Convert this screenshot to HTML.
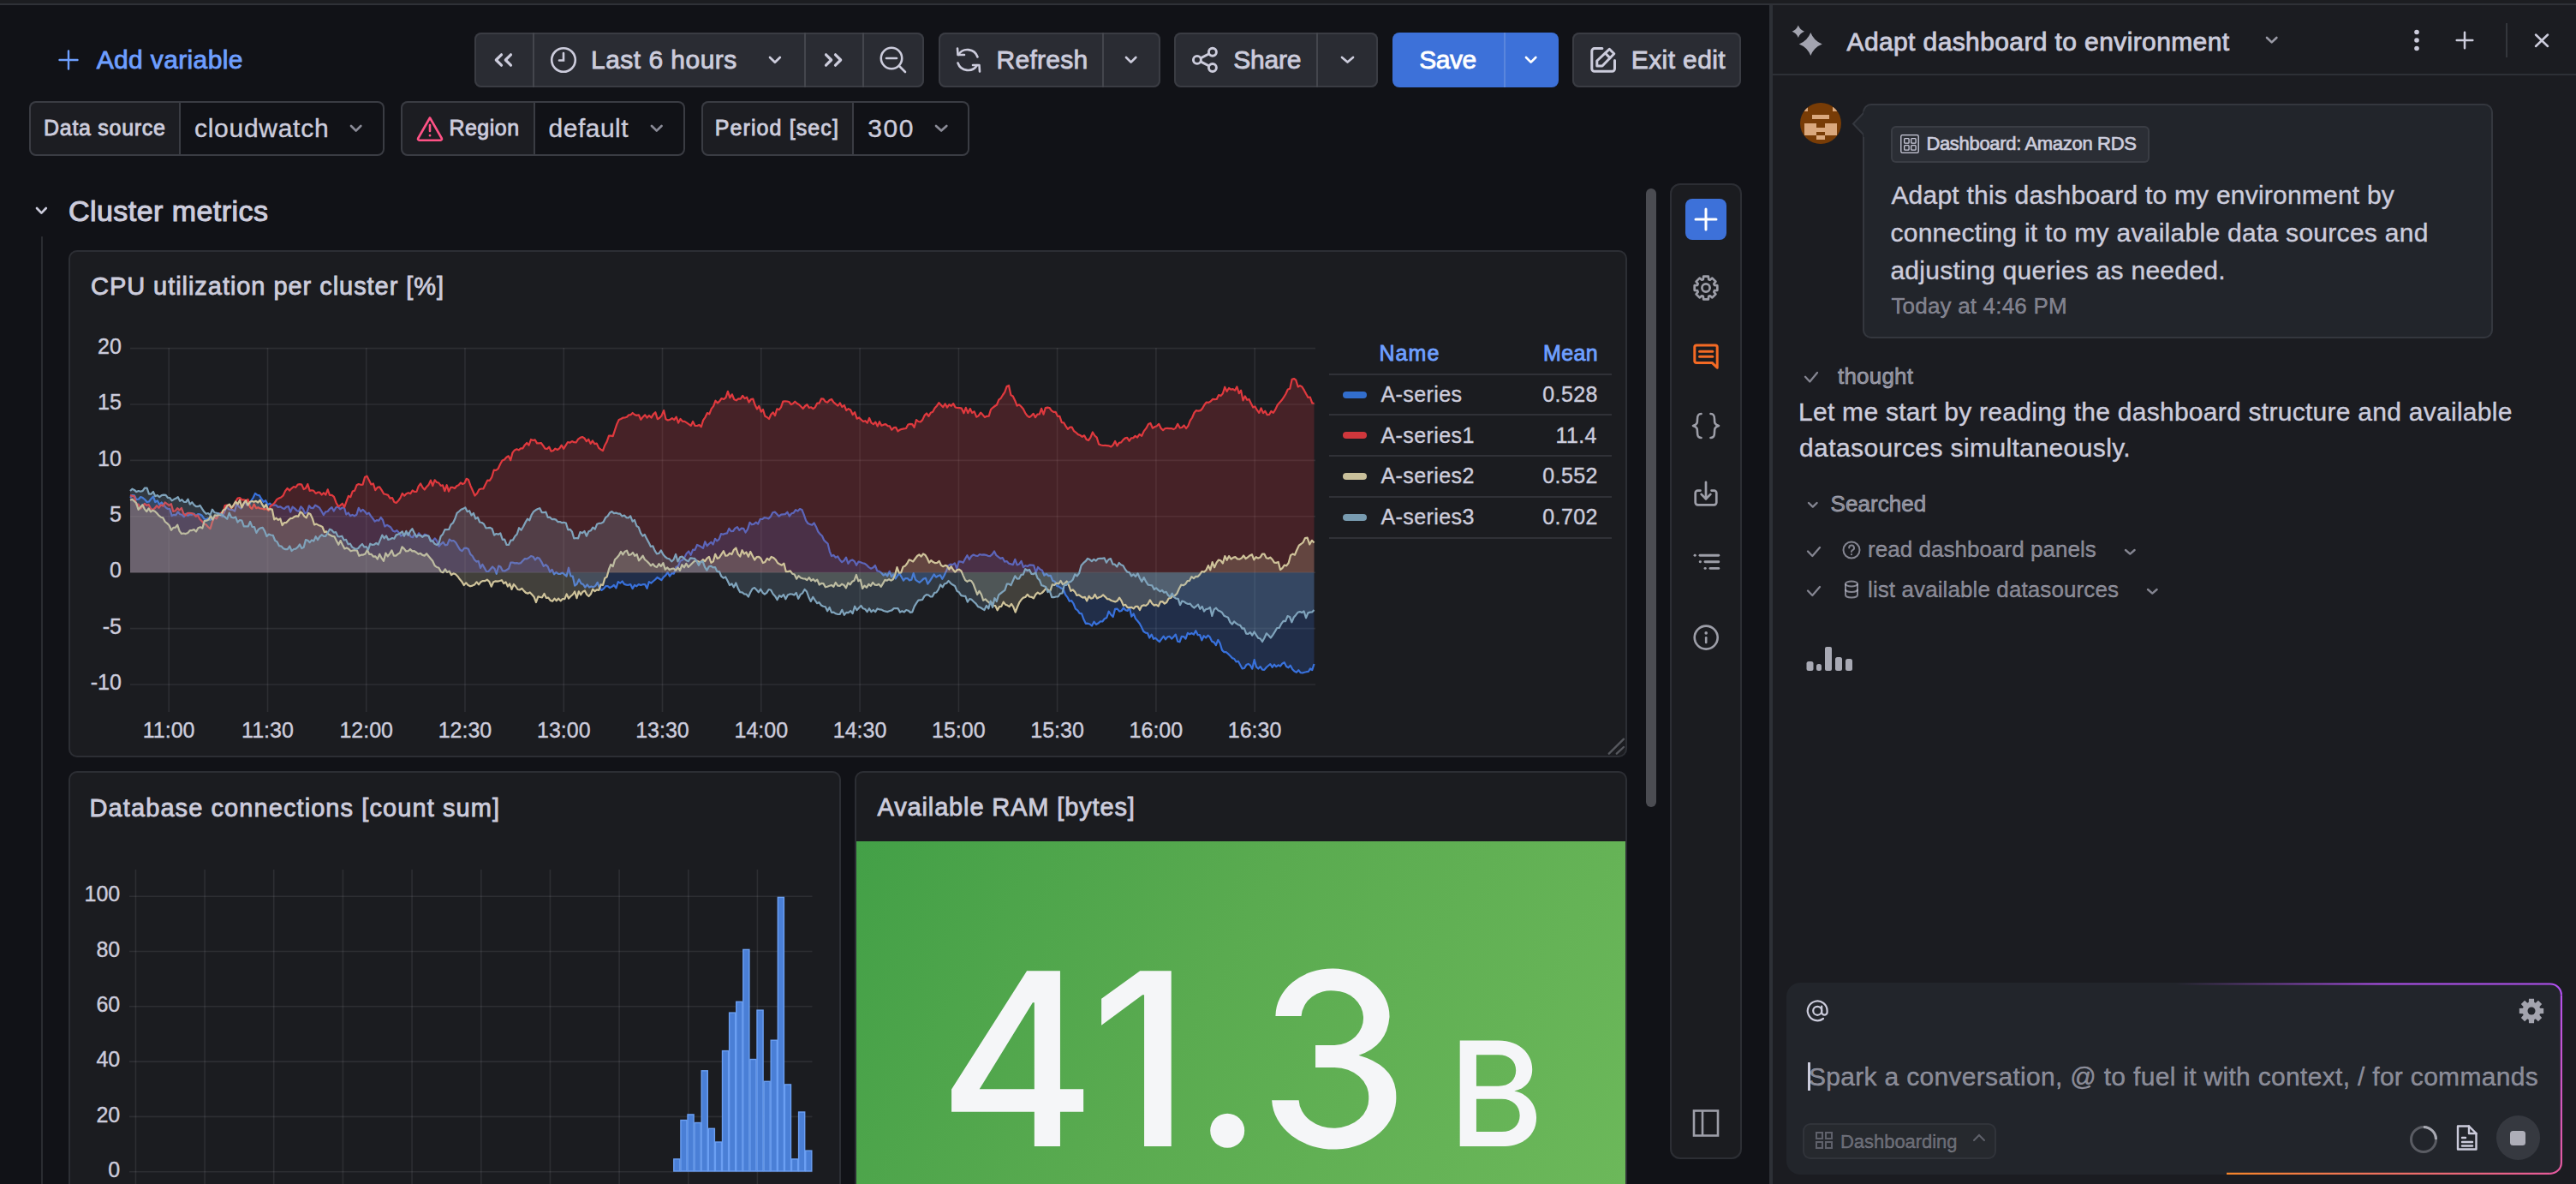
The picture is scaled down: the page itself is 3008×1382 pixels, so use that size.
<!DOCTYPE html>
<html><head><meta charset="utf-8"><title>Grafana</title>
<style>
html,body{margin:0;padding:0;}
body{width:3008px;height:1382px;overflow:hidden;background:#111217;position:relative;font-family:"Liberation Sans",sans-serif;}
.b,.s,.t{position:absolute;}
.t{white-space:pre;}
.s{overflow:visible;}
</style></head><body>
<div class="b" style="left:0px;top:0px;width:3008px;height:4px;background:#1c1d21;"></div>
<div class="b" style="left:0px;top:4px;width:3008px;height:2px;background:#2f3137;"></div>
<svg class="s" style="left:68px;top:58px;" width="24" height="24" viewBox="0 0 24 24"><path d="M12 1.5V22.5M1.5 12H22.5" stroke="#6e9fff" stroke-width="2.4" stroke-linecap="round"/></svg>
<div class="b" style="left:554px;top:38px;width:525px;height:64px;background:#2a2c33;box-shadow:inset 0 0 0 2px #3a3c43;border-radius:8px;"></div>
<div class="b" style="left:622px;top:38px;width:2px;height:64px;background:#44464d;"></div>
<div class="b" style="left:939px;top:38px;width:2px;height:64px;background:#44464d;"></div>
<div class="b" style="left:1007px;top:38px;width:2px;height:64px;background:#44464d;"></div>
<svg class="s" style="left:574px;top:58px;" width="28" height="24" viewBox="0 0 28 24"><g fill="none" stroke="#ccccdc" stroke-width="3.2" stroke-linecap="round" stroke-linejoin="round"><polyline points="11.5,5.8 5.3,12 11.5,18.2"/><polyline points="22.5,5.8 16.3,12 22.5,18.2"/></g></svg>
<svg class="s" style="left:642px;top:54px;" width="32" height="32" viewBox="0 0 32 32"><g fill="none" stroke="#ccccdc" stroke-width="2.6" stroke-linecap="round"><circle cx="16" cy="16" r="13.8"/><polyline points="16,8 16,16.5 11,16.5"/></g></svg>
<svg class="s" style="left:895.85px;top:63.85px;" width="17.8" height="11.8" viewBox="0 0 17.8 11.8"><polyline points="3,3 8.90,8.80 14.80,3" fill="none" stroke="#ccccdc" stroke-width="2.7" stroke-linecap="round" stroke-linejoin="round"/></svg>
<svg class="s" style="left:959px;top:58px;" width="28" height="24" viewBox="0 0 28 24"><g fill="none" stroke="#ccccdc" stroke-width="3.2" stroke-linecap="round" stroke-linejoin="round"><polyline points="5.5,5.8 11.7,12 5.5,18.2"/><polyline points="16.5,5.8 22.7,12 16.5,18.2"/></g></svg>
<svg class="s" style="left:1026px;top:53px;" width="34" height="34" viewBox="0 0 34 34"><g fill="none" stroke="#ccccdc" stroke-width="2.6" stroke-linecap="round"><circle cx="15" cy="15" r="12.2"/><line x1="24" y1="24" x2="31" y2="31"/><line x1="9" y1="15" x2="21" y2="15"/></g></svg>
<div class="b" style="left:1095.5px;top:38px;width:259.5px;height:64px;background:#2a2c33;box-shadow:inset 0 0 0 2px #3a3c43;border-radius:8px;"></div>
<div class="b" style="left:1287px;top:38px;width:2px;height:64px;background:#44464d;"></div>
<svg class="s" style="left:1114px;top:53px;" width="34" height="34" viewBox="0 0 34 34"><g fill="none" stroke="#ccccdc" stroke-width="2.6" stroke-linecap="round" stroke-linejoin="round"><path d="M27.5 13.5 A12.5 12.5 0 0 0 5 11"/><polyline points="4,3.5 4.5,11 12,11"/><path d="M4.5 20.5 A12.5 12.5 0 0 0 27 23"/><polyline points="30,30.5 29.5,23 22,23"/></g></svg>
<svg class="s" style="left:1312.35px;top:64.35px;" width="17.3" height="11.599999999999998" viewBox="0 0 17.3 11.599999999999998"><polyline points="3,3 8.65,8.60 14.30,3" fill="none" stroke="#ccccdc" stroke-width="2.7" stroke-linecap="round" stroke-linejoin="round"/></svg>
<div class="b" style="left:1371.4px;top:38px;width:238.0px;height:64px;background:#2a2c33;box-shadow:inset 0 0 0 2px #3a3c43;border-radius:8px;"></div>
<div class="b" style="left:1537.3px;top:38px;width:2.0px;height:64px;background:#44464d;"></div>
<svg class="s" style="left:0px;top:0px;" width="3008" height="1382" viewBox="0 0 3008 1382"><g fill="none" stroke="#ccccdc" stroke-width="2.9"><circle cx="1397.9" cy="69.9" r="4.5"/><circle cx="1415.9" cy="60.8" r="4.5"/><circle cx="1415.9" cy="79" r="4.5"/><line x1="1401.9" y1="67.9" x2="1411.9" y2="62.8"/><line x1="1401.9" y1="71.9" x2="1411.9" y2="77"/></g></svg>
<svg class="s" style="left:1564.35px;top:64.35px;" width="19.000000000000046" height="11.599999999999998" viewBox="0 0 19.000000000000046 11.599999999999998"><polyline points="3,3 9.50,8.60 16.00,3" fill="none" stroke="#ccccdc" stroke-width="2.7" stroke-linecap="round" stroke-linejoin="round"/></svg>
<div class="b" style="left:1625.7px;top:38px;width:194.0px;height:64px;background:#3d71d9;border-radius:8px;"></div>
<div class="b" style="left:1755.5px;top:38px;width:2.0px;height:64px;background:#5a86dd;"></div>
<svg class="s" style="left:1779.35px;top:64.35px;" width="17.3" height="11.599999999999998" viewBox="0 0 17.3 11.599999999999998"><polyline points="3,3 8.65,8.60 14.30,3" fill="none" stroke="#ffffff" stroke-width="2.7" stroke-linecap="round" stroke-linejoin="round"/></svg>
<div class="b" style="left:1836px;top:38px;width:197.29999999999995px;height:64px;background:#2a2c33;box-shadow:inset 0 0 0 2px #3a3c43;border-radius:8px;"></div>
<svg class="s" style="left:0px;top:0px;" width="3008" height="1382" viewBox="0 0 3008 1382"><g fill="none" stroke="#ccccdc" stroke-width="3" stroke-linecap="round" stroke-linejoin="round"><path d="M1870.9 56.6H1861.8a3 3 0 0 0-3 3V80.2a3 3 0 0 0 3 3H1882.5a3 3 0 0 0 3-3V70.4"/><path d="M1864.8 77V71L1879.3 57.3L1884.8 62.8L1871 77Z"/><line x1="1874.4" y1="62" x2="1880" y2="67.6"/></g></svg>
<div class="b" style="left:34px;top:118px;width:176px;height:64px;background:#1c1d22;border-radius:8px;border-top-right-radius:0;border-bottom-right-radius:0;"></div>
<div class="b" style="left:34px;top:118px;width:415.2px;height:64px;box-shadow:inset 0 0 0 2px #3a3c43;border-radius:8px;"></div>
<div class="b" style="left:209px;top:118px;width:2px;height:64px;background:#3a3c43;"></div>
<svg class="s" style="left:407.35px;top:144.35px;" width="17.3" height="11.600000000000012" viewBox="0 0 17.3 11.600000000000012"><polyline points="3,3 8.65,8.60 14.30,3" fill="none" stroke="rgba(204,204,220,0.65)" stroke-width="2.7" stroke-linecap="round" stroke-linejoin="round"/></svg>
<div class="b" style="left:468.2px;top:118px;width:155.8px;height:64px;background:#1c1d22;border-radius:8px;border-top-right-radius:0;border-bottom-right-radius:0;"></div>
<div class="b" style="left:468.2px;top:118px;width:332.09999999999997px;height:64px;box-shadow:inset 0 0 0 2px #3a3c43;border-radius:8px;"></div>
<div class="b" style="left:623px;top:118px;width:2px;height:64px;background:#3a3c43;"></div>
<svg class="s" style="left:485px;top:134px;" width="34" height="32" viewBox="0 0 34 32"><g fill="none" stroke="#ff5286" stroke-width="2.6" stroke-linecap="round" stroke-linejoin="round"><path d="M17 3.5L3.2 27.5a1.5 1.5 0 0 0 1.3 2.2h25a1.5 1.5 0 0 0 1.3-2.2z"/><line x1="17" y1="12" x2="17" y2="19"/><line x1="17" y1="24" x2="17" y2="24.2"/></g></svg>
<svg class="s" style="left:758.35px;top:144.35px;" width="17.500000000000046" height="11.600000000000012" viewBox="0 0 17.500000000000046 11.600000000000012"><polyline points="3,3 8.75,8.60 14.50,3" fill="none" stroke="rgba(204,204,220,0.65)" stroke-width="2.7" stroke-linecap="round" stroke-linejoin="round"/></svg>
<div class="b" style="left:819.3px;top:118px;width:176.70000000000005px;height:64px;background:#1c1d22;border-radius:8px;border-top-right-radius:0;border-bottom-right-radius:0;"></div>
<div class="b" style="left:819.3px;top:118px;width:312.5px;height:64px;box-shadow:inset 0 0 0 2px #3a3c43;border-radius:8px;"></div>
<div class="b" style="left:995px;top:118px;width:2px;height:64px;background:#3a3c43;"></div>
<svg class="s" style="left:1089.9499999999998px;top:144.35px;" width="18.3" height="11.600000000000012" viewBox="0 0 18.3 11.600000000000012"><polyline points="3,3 9.15,8.60 15.30,3" fill="none" stroke="rgba(204,204,220,0.65)" stroke-width="2.7" stroke-linecap="round" stroke-linejoin="round"/></svg>
<svg class="s" style="left:39.85px;top:240.35px;" width="16.8" height="11.600000000000012" viewBox="0 0 16.8 11.600000000000012"><polyline points="3,3 8.40,8.60 13.80,3" fill="none" stroke="#ccccdc" stroke-width="2.7" stroke-linecap="round" stroke-linejoin="round"/></svg>
<div class="b" style="left:48px;top:276px;width:2px;height:1106px;background:#2a2c31;"></div>
<div class="b" style="left:80px;top:292px;width:1820px;height:592px;background:#1b1c20;box-shadow:inset 0 0 0 2px #2c2e34;border-radius:10px;"></div>
<div class="b" style="left:80px;top:900px;width:902px;height:500px;background:#1b1c20;box-shadow:inset 0 0 0 2px #2c2e34;border-radius:10px;"></div>
<div class="b" style="left:998px;top:900px;width:902px;height:500px;background:#1b1c20;box-shadow:inset 0 0 0 2px #2c2e34;border-radius:10px;"></div>
<svg class="s" style="left:0px;top:0px;" width="3008" height="1382" viewBox="0 0 3008 1382"><g stroke="rgba(204,204,220,0.10)" stroke-width="1.6"><line x1="152" y1="406.6" x2="1536" y2="406.6"/><line x1="152" y1="472.0" x2="1536" y2="472.0"/><line x1="152" y1="537.4" x2="1536" y2="537.4"/><line x1="152" y1="602.8" x2="1536" y2="602.8"/><line x1="152" y1="668.2" x2="1536" y2="668.2"/><line x1="152" y1="733.6" x2="1536" y2="733.6"/><line x1="152" y1="799.0" x2="1536" y2="799.0"/><line x1="197.2" y1="406" x2="197.2" y2="831"/><line x1="312.5" y1="406" x2="312.5" y2="831"/><line x1="427.7" y1="406" x2="427.7" y2="831"/><line x1="543.0" y1="406" x2="543.0" y2="831"/><line x1="658.3" y1="406" x2="658.3" y2="831"/><line x1="773.5" y1="406" x2="773.5" y2="831"/><line x1="888.8" y1="406" x2="888.8" y2="831"/><line x1="1004.1" y1="406" x2="1004.1" y2="831"/><line x1="1119.4" y1="406" x2="1119.4" y2="831"/><line x1="1234.6" y1="406" x2="1234.6" y2="831"/><line x1="1349.9" y1="406" x2="1349.9" y2="831"/><line x1="1465.2" y1="406" x2="1465.2" y2="831"/></g></svg>
<svg class="s" style="left:0px;top:0px;" width="3008" height="1382" viewBox="0 0 3008 1382"><polygon points="152,668.2 152.0,581.0 154.4,578.0 156.9,578.3 159.3,582.9 161.8,582.7 164.2,580.1 166.7,581.1 169.1,583.0 171.6,586.0 174.0,585.5 176.4,582.2 178.9,579.5 181.3,586.0 183.8,584.3 186.2,588.9 188.7,586.5 191.1,589.6 193.6,592.3 196.0,594.0 198.3,594.2 200.7,602.1 203.1,600.8 205.4,601.2 207.8,597.4 210.1,600.3 212.4,600.8 214.8,603.2 217.2,599.6 219.5,601.9 221.8,600.4 224.2,600.8 226.6,599.6 228.9,602.4 231.2,600.1 233.6,600.4 235.9,601.8 238.3,605.4 240.7,606.6 243.0,605.0 245.4,606.8 247.8,605.6 250.2,603.5 252.6,605.3 255.0,599.1 257.3,601.6 259.7,603.0 262.1,597.6 264.5,591.4 266.9,594.2 269.3,595.0 271.7,595.2 274.1,596.6 276.5,587.6 278.9,591.4 281.3,593.5 283.6,590.1 286.0,584.6 288.4,589.5 290.8,589.4 293.2,584.5 295.6,581.0 298.0,575.9 300.5,577.8 302.9,578.4 305.3,582.5 307.7,585.9 310.2,584.2 312.6,589.1 315.0,587.6 317.4,589.6 319.9,589.7 322.3,589.7 324.7,591.8 327.1,591.3 329.6,592.9 332.0,594.0 334.4,591.6 336.8,591.0 339.2,597.6 341.6,591.6 344.0,593.4 346.5,595.9 348.9,597.0 351.3,591.3 353.7,593.8 356.1,599.2 358.5,597.9 360.9,590.3 363.3,593.0 365.7,593.2 368.1,589.7 370.5,591.0 373.0,592.6 375.4,596.6 377.8,601.1 380.2,597.4 382.6,597.0 385.0,594.0 387.4,592.1 389.8,596.5 392.2,592.5 394.6,591.3 397.1,594.3 399.5,592.8 401.9,592.2 404.3,600.5 406.7,598.5 409.1,602.2 411.5,600.9 413.9,602.3 416.4,600.8 418.8,592.8 421.2,597.1 423.6,594.8 426.0,597.0 428.3,600.0 430.7,598.6 433.0,602.2 435.3,605.1 437.7,608.6 440.0,607.1 442.3,607.7 444.7,604.0 447.0,607.0 449.3,614.5 451.7,612.8 454.0,614.0 456.3,615.5 458.7,619.4 461.0,620.6 463.3,619.1 465.7,621.5 468.0,625.5 470.3,624.2 472.7,623.6 475.0,623.5 477.3,622.2 479.7,626.5 482.0,627.1 484.3,623.0 486.7,627.0 489.0,622.3 491.3,625.1 493.7,626.1 496.0,623.7 498.3,624.5 500.7,626.4 503.0,630.1 505.3,631.4 507.7,628.3 510.0,631.0 512.5,637.7 514.9,635.1 517.4,632.7 519.9,636.3 522.3,635.9 524.8,629.6 527.3,631.3 529.7,631.0 532.2,633.3 534.7,637.6 537.1,641.6 539.6,643.2 542.1,639.9 544.5,639.6 547.0,641.0 549.3,646.9 551.7,649.0 554.0,653.2 556.3,655.6 558.7,654.8 561.0,662.9 563.3,658.8 565.7,662.9 568.0,667.0 570.4,667.0 572.7,664.2 575.1,661.5 577.5,663.7 579.8,669.8 582.2,660.5 584.5,661.5 586.9,666.2 589.3,666.4 591.6,665.3 594.0,663.8 596.4,656.7 598.7,656.5 601.1,657.4 603.5,657.1 605.8,657.8 608.2,657.1 610.5,654.5 612.9,652.1 615.3,652.4 617.6,651.0 620.0,649.0 622.5,649.7 624.9,653.5 627.4,650.8 629.8,651.8 632.3,655.8 634.8,660.9 637.2,659.2 639.7,661.4 642.2,667.6 644.6,664.8 647.1,670.3 649.5,667.9 652.0,670.0 654.4,669.8 656.8,668.5 659.2,670.7 661.6,672.5 664.0,662.7 666.4,672.5 668.8,672.7 671.2,683.6 673.6,681.8 676.1,676.3 678.5,681.1 680.9,682.0 683.3,685.6 685.7,682.4 688.1,685.6 690.5,684.5 692.9,685.2 695.3,683.9 697.7,679.8 700.1,686.3 702.5,688.9 704.9,687.1 707.3,684.2 709.7,684.2 712.1,686.1 714.5,684.8 716.9,683.0 719.4,686.3 721.8,679.1 724.2,680.7 726.6,678.5 729.0,681.9 731.4,682.6 733.8,682.8 736.2,682.1 738.6,687.1 741.0,683.0 743.4,684.3 745.8,682.0 748.2,683.0 750.6,682.2 753.1,682.1 755.5,686.8 757.9,679.1 760.3,680.6 762.7,678.5 765.1,676.5 767.5,674.0 769.9,675.5 772.4,677.1 774.8,673.6 777.2,671.7 779.6,668.1 782.0,672.6 784.5,669.2 786.9,669.7 789.4,661.8 791.8,660.8 794.3,654.8 796.8,653.8 799.2,650.8 801.7,646.0 804.2,643.5 806.6,647.8 809.1,641.6 811.5,641.9 814.0,636.0 816.3,637.1 818.7,638.3 821.0,639.9 823.3,632.2 825.7,637.2 828.0,634.8 830.3,632.7 832.7,635.5 835.0,628.8 837.3,631.4 839.7,629.4 842.0,623.1 844.3,623.8 846.7,622.8 849.0,622.4 851.3,616.8 853.7,620.2 856.0,620.0 858.4,616.6 860.9,615.2 863.3,618.9 865.8,616.6 868.2,616.8 870.6,621.5 873.1,617.6 875.5,609.9 877.9,612.3 880.4,611.6 882.8,609.7 885.2,611.5 887.7,605.9 890.1,606.0 892.6,604.2 895.0,604.5 897.4,605.4 899.9,602.9 902.3,598.2 904.8,597.6 907.2,600.0 909.6,602.7 912.1,600.7 914.5,600.4 916.9,600.1 919.4,597.7 921.8,602.5 924.2,599.3 926.7,598.6 929.1,595.1 931.6,596.6 934.0,594.0 936.4,595.0 938.7,600.6 941.1,607.6 943.5,611.0 945.8,611.9 948.2,612.8 950.5,610.4 952.9,614.7 955.3,620.5 957.6,623.4 960.0,625.5 962.2,630.5 964.4,632.6 966.6,634.5 968.8,643.6 971.0,649.0 973.4,647.9 975.8,650.8 978.3,649.5 980.7,653.5 983.1,656.2 985.5,654.3 988.0,650.6 990.4,657.9 992.8,654.5 995.2,653.5 997.7,655.1 1000.1,659.8 1002.5,655.5 1004.9,656.3 1007.3,657.3 1009.8,657.9 1012.2,659.7 1014.6,662.1 1017.0,663.7 1019.5,662.5 1021.9,660.0 1024.3,666.4 1026.7,666.8 1029.2,668.7 1031.6,671.6 1034.0,670.0 1036.3,672.4 1038.7,666.8 1041.0,673.3 1043.3,670.5 1045.7,675.4 1048.0,672.0 1050.3,669.2 1052.7,673.5 1055.0,677.6 1057.3,675.1 1059.7,675.0 1062.0,677.4 1064.3,676.8 1066.7,669.1 1069.0,676.7 1071.3,678.4 1073.7,679.9 1076.0,678.0 1078.4,675.6 1080.9,674.8 1083.3,681.6 1085.7,678.4 1088.1,674.6 1090.6,670.5 1093.0,673.7 1095.4,672.3 1097.9,671.3 1100.3,675.8 1102.7,671.5 1105.1,666.1 1107.6,660.1 1110.0,658.6 1112.4,659.2 1114.9,657.4 1117.3,663.9 1119.7,655.3 1122.1,655.6 1124.6,656.7 1127.0,652.2 1129.4,648.2 1131.9,653.0 1134.3,649.1 1136.7,647.5 1139.1,648.6 1141.6,649.0 1144.0,647.0 1146.4,647.7 1148.9,647.3 1151.3,647.8 1153.7,648.8 1156.1,649.1 1158.6,647.1 1161.0,643.5 1163.4,648.2 1165.9,650.1 1168.3,651.9 1170.7,651.1 1173.1,655.6 1175.6,655.0 1178.0,657.7 1180.4,658.4 1182.9,659.2 1185.3,652.9 1187.7,659.4 1190.1,658.4 1192.6,655.0 1195.0,662.1 1197.4,660.2 1199.9,661.0 1202.3,659.4 1204.7,659.6 1207.1,659.8 1209.6,668.3 1212.0,662.0 1214.5,664.6 1216.9,665.8 1219.4,671.7 1221.8,669.8 1224.3,672.1 1226.8,671.8 1229.2,677.9 1231.7,678.7 1234.2,683.9 1236.6,684.8 1239.1,686.6 1241.5,687.5 1244.0,694.0 1246.4,697.1 1248.8,701.7 1251.2,701.1 1253.5,704.5 1255.9,710.7 1258.3,712.3 1260.7,715.9 1263.1,716.4 1265.5,723.1 1267.8,727.8 1270.2,727.7 1272.6,728.5 1275.0,730.5 1277.5,725.7 1279.9,728.9 1282.4,727.6 1284.9,725.3 1287.3,725.5 1289.8,722.3 1292.3,721.0 1294.7,713.7 1297.2,717.5 1299.7,720.0 1302.1,710.9 1304.6,710.6 1307.1,713.6 1309.5,713.0 1312.0,709.5 1314.3,712.2 1316.7,712.9 1319.0,709.4 1321.3,719.7 1323.7,716.3 1326.0,722.1 1328.3,724.8 1330.7,727.7 1333.0,732.1 1335.3,737.0 1337.7,738.6 1340.0,739.0 1342.3,744.5 1344.7,740.6 1347.0,745.8 1349.3,744.7 1351.7,747.3 1354.0,749.0 1356.3,745.8 1358.7,742.7 1361.0,746.3 1363.4,743.4 1365.8,742.9 1368.1,745.6 1370.5,743.2 1372.8,740.6 1375.2,748.8 1377.5,749.3 1379.8,742.9 1382.2,743.1 1384.5,745.7 1386.9,738.8 1389.2,740.3 1391.6,739.1 1394.0,740.6 1396.3,736.2 1398.7,741.2 1401.0,741.0 1403.4,747.4 1405.7,742.2 1408.1,744.5 1410.5,741.7 1412.8,743.7 1415.2,748.8 1417.5,749.6 1419.9,753.0 1422.3,746.9 1424.6,750.9 1427.0,758.9 1429.4,761.1 1431.7,761.2 1434.1,763.1 1436.5,765.5 1438.8,768.1 1441.2,769.0 1443.5,772.5 1445.9,771.8 1448.3,776.2 1450.6,780.5 1453.0,780.0 1455.3,776.1 1457.7,774.9 1460.0,776.7 1462.3,780.6 1464.7,770.1 1467.0,778.4 1469.3,780.5 1471.7,778.1 1474.0,781.7 1476.3,781.9 1478.7,779.0 1481.0,777.0 1483.3,775.1 1485.7,778.9 1488.0,775.7 1490.3,778.2 1492.7,776.3 1495.0,777.6 1497.4,774.4 1499.7,773.2 1502.1,778.1 1504.5,779.3 1506.8,776.7 1509.2,781.2 1511.5,783.6 1513.9,784.8 1516.3,782.2 1518.6,785.2 1521.0,785.5 1523.2,784.7 1525.5,784.2 1527.8,784.0 1530.0,780.4 1532.2,782.1 1534.5,775.0 1534.5,668.2" fill="#3871dc" fill-opacity="0.22"/><polyline points="152.0,581.0 154.4,578.0 156.9,578.3 159.3,582.9 161.8,582.7 164.2,580.1 166.7,581.1 169.1,583.0 171.6,586.0 174.0,585.5 176.4,582.2 178.9,579.5 181.3,586.0 183.8,584.3 186.2,588.9 188.7,586.5 191.1,589.6 193.6,592.3 196.0,594.0 198.3,594.2 200.7,602.1 203.1,600.8 205.4,601.2 207.8,597.4 210.1,600.3 212.4,600.8 214.8,603.2 217.2,599.6 219.5,601.9 221.8,600.4 224.2,600.8 226.6,599.6 228.9,602.4 231.2,600.1 233.6,600.4 235.9,601.8 238.3,605.4 240.7,606.6 243.0,605.0 245.4,606.8 247.8,605.6 250.2,603.5 252.6,605.3 255.0,599.1 257.3,601.6 259.7,603.0 262.1,597.6 264.5,591.4 266.9,594.2 269.3,595.0 271.7,595.2 274.1,596.6 276.5,587.6 278.9,591.4 281.3,593.5 283.6,590.1 286.0,584.6 288.4,589.5 290.8,589.4 293.2,584.5 295.6,581.0 298.0,575.9 300.5,577.8 302.9,578.4 305.3,582.5 307.7,585.9 310.2,584.2 312.6,589.1 315.0,587.6 317.4,589.6 319.9,589.7 322.3,589.7 324.7,591.8 327.1,591.3 329.6,592.9 332.0,594.0 334.4,591.6 336.8,591.0 339.2,597.6 341.6,591.6 344.0,593.4 346.5,595.9 348.9,597.0 351.3,591.3 353.7,593.8 356.1,599.2 358.5,597.9 360.9,590.3 363.3,593.0 365.7,593.2 368.1,589.7 370.5,591.0 373.0,592.6 375.4,596.6 377.8,601.1 380.2,597.4 382.6,597.0 385.0,594.0 387.4,592.1 389.8,596.5 392.2,592.5 394.6,591.3 397.1,594.3 399.5,592.8 401.9,592.2 404.3,600.5 406.7,598.5 409.1,602.2 411.5,600.9 413.9,602.3 416.4,600.8 418.8,592.8 421.2,597.1 423.6,594.8 426.0,597.0 428.3,600.0 430.7,598.6 433.0,602.2 435.3,605.1 437.7,608.6 440.0,607.1 442.3,607.7 444.7,604.0 447.0,607.0 449.3,614.5 451.7,612.8 454.0,614.0 456.3,615.5 458.7,619.4 461.0,620.6 463.3,619.1 465.7,621.5 468.0,625.5 470.3,624.2 472.7,623.6 475.0,623.5 477.3,622.2 479.7,626.5 482.0,627.1 484.3,623.0 486.7,627.0 489.0,622.3 491.3,625.1 493.7,626.1 496.0,623.7 498.3,624.5 500.7,626.4 503.0,630.1 505.3,631.4 507.7,628.3 510.0,631.0 512.5,637.7 514.9,635.1 517.4,632.7 519.9,636.3 522.3,635.9 524.8,629.6 527.3,631.3 529.7,631.0 532.2,633.3 534.7,637.6 537.1,641.6 539.6,643.2 542.1,639.9 544.5,639.6 547.0,641.0 549.3,646.9 551.7,649.0 554.0,653.2 556.3,655.6 558.7,654.8 561.0,662.9 563.3,658.8 565.7,662.9 568.0,667.0 570.4,667.0 572.7,664.2 575.1,661.5 577.5,663.7 579.8,669.8 582.2,660.5 584.5,661.5 586.9,666.2 589.3,666.4 591.6,665.3 594.0,663.8 596.4,656.7 598.7,656.5 601.1,657.4 603.5,657.1 605.8,657.8 608.2,657.1 610.5,654.5 612.9,652.1 615.3,652.4 617.6,651.0 620.0,649.0 622.5,649.7 624.9,653.5 627.4,650.8 629.8,651.8 632.3,655.8 634.8,660.9 637.2,659.2 639.7,661.4 642.2,667.6 644.6,664.8 647.1,670.3 649.5,667.9 652.0,670.0 654.4,669.8 656.8,668.5 659.2,670.7 661.6,672.5 664.0,662.7 666.4,672.5 668.8,672.7 671.2,683.6 673.6,681.8 676.1,676.3 678.5,681.1 680.9,682.0 683.3,685.6 685.7,682.4 688.1,685.6 690.5,684.5 692.9,685.2 695.3,683.9 697.7,679.8 700.1,686.3 702.5,688.9 704.9,687.1 707.3,684.2 709.7,684.2 712.1,686.1 714.5,684.8 716.9,683.0 719.4,686.3 721.8,679.1 724.2,680.7 726.6,678.5 729.0,681.9 731.4,682.6 733.8,682.8 736.2,682.1 738.6,687.1 741.0,683.0 743.4,684.3 745.8,682.0 748.2,683.0 750.6,682.2 753.1,682.1 755.5,686.8 757.9,679.1 760.3,680.6 762.7,678.5 765.1,676.5 767.5,674.0 769.9,675.5 772.4,677.1 774.8,673.6 777.2,671.7 779.6,668.1 782.0,672.6 784.5,669.2 786.9,669.7 789.4,661.8 791.8,660.8 794.3,654.8 796.8,653.8 799.2,650.8 801.7,646.0 804.2,643.5 806.6,647.8 809.1,641.6 811.5,641.9 814.0,636.0 816.3,637.1 818.7,638.3 821.0,639.9 823.3,632.2 825.7,637.2 828.0,634.8 830.3,632.7 832.7,635.5 835.0,628.8 837.3,631.4 839.7,629.4 842.0,623.1 844.3,623.8 846.7,622.8 849.0,622.4 851.3,616.8 853.7,620.2 856.0,620.0 858.4,616.6 860.9,615.2 863.3,618.9 865.8,616.6 868.2,616.8 870.6,621.5 873.1,617.6 875.5,609.9 877.9,612.3 880.4,611.6 882.8,609.7 885.2,611.5 887.7,605.9 890.1,606.0 892.6,604.2 895.0,604.5 897.4,605.4 899.9,602.9 902.3,598.2 904.8,597.6 907.2,600.0 909.6,602.7 912.1,600.7 914.5,600.4 916.9,600.1 919.4,597.7 921.8,602.5 924.2,599.3 926.7,598.6 929.1,595.1 931.6,596.6 934.0,594.0 936.4,595.0 938.7,600.6 941.1,607.6 943.5,611.0 945.8,611.9 948.2,612.8 950.5,610.4 952.9,614.7 955.3,620.5 957.6,623.4 960.0,625.5 962.2,630.5 964.4,632.6 966.6,634.5 968.8,643.6 971.0,649.0 973.4,647.9 975.8,650.8 978.3,649.5 980.7,653.5 983.1,656.2 985.5,654.3 988.0,650.6 990.4,657.9 992.8,654.5 995.2,653.5 997.7,655.1 1000.1,659.8 1002.5,655.5 1004.9,656.3 1007.3,657.3 1009.8,657.9 1012.2,659.7 1014.6,662.1 1017.0,663.7 1019.5,662.5 1021.9,660.0 1024.3,666.4 1026.7,666.8 1029.2,668.7 1031.6,671.6 1034.0,670.0 1036.3,672.4 1038.7,666.8 1041.0,673.3 1043.3,670.5 1045.7,675.4 1048.0,672.0 1050.3,669.2 1052.7,673.5 1055.0,677.6 1057.3,675.1 1059.7,675.0 1062.0,677.4 1064.3,676.8 1066.7,669.1 1069.0,676.7 1071.3,678.4 1073.7,679.9 1076.0,678.0 1078.4,675.6 1080.9,674.8 1083.3,681.6 1085.7,678.4 1088.1,674.6 1090.6,670.5 1093.0,673.7 1095.4,672.3 1097.9,671.3 1100.3,675.8 1102.7,671.5 1105.1,666.1 1107.6,660.1 1110.0,658.6 1112.4,659.2 1114.9,657.4 1117.3,663.9 1119.7,655.3 1122.1,655.6 1124.6,656.7 1127.0,652.2 1129.4,648.2 1131.9,653.0 1134.3,649.1 1136.7,647.5 1139.1,648.6 1141.6,649.0 1144.0,647.0 1146.4,647.7 1148.9,647.3 1151.3,647.8 1153.7,648.8 1156.1,649.1 1158.6,647.1 1161.0,643.5 1163.4,648.2 1165.9,650.1 1168.3,651.9 1170.7,651.1 1173.1,655.6 1175.6,655.0 1178.0,657.7 1180.4,658.4 1182.9,659.2 1185.3,652.9 1187.7,659.4 1190.1,658.4 1192.6,655.0 1195.0,662.1 1197.4,660.2 1199.9,661.0 1202.3,659.4 1204.7,659.6 1207.1,659.8 1209.6,668.3 1212.0,662.0 1214.5,664.6 1216.9,665.8 1219.4,671.7 1221.8,669.8 1224.3,672.1 1226.8,671.8 1229.2,677.9 1231.7,678.7 1234.2,683.9 1236.6,684.8 1239.1,686.6 1241.5,687.5 1244.0,694.0 1246.4,697.1 1248.8,701.7 1251.2,701.1 1253.5,704.5 1255.9,710.7 1258.3,712.3 1260.7,715.9 1263.1,716.4 1265.5,723.1 1267.8,727.8 1270.2,727.7 1272.6,728.5 1275.0,730.5 1277.5,725.7 1279.9,728.9 1282.4,727.6 1284.9,725.3 1287.3,725.5 1289.8,722.3 1292.3,721.0 1294.7,713.7 1297.2,717.5 1299.7,720.0 1302.1,710.9 1304.6,710.6 1307.1,713.6 1309.5,713.0 1312.0,709.5 1314.3,712.2 1316.7,712.9 1319.0,709.4 1321.3,719.7 1323.7,716.3 1326.0,722.1 1328.3,724.8 1330.7,727.7 1333.0,732.1 1335.3,737.0 1337.7,738.6 1340.0,739.0 1342.3,744.5 1344.7,740.6 1347.0,745.8 1349.3,744.7 1351.7,747.3 1354.0,749.0 1356.3,745.8 1358.7,742.7 1361.0,746.3 1363.4,743.4 1365.8,742.9 1368.1,745.6 1370.5,743.2 1372.8,740.6 1375.2,748.8 1377.5,749.3 1379.8,742.9 1382.2,743.1 1384.5,745.7 1386.9,738.8 1389.2,740.3 1391.6,739.1 1394.0,740.6 1396.3,736.2 1398.7,741.2 1401.0,741.0 1403.4,747.4 1405.7,742.2 1408.1,744.5 1410.5,741.7 1412.8,743.7 1415.2,748.8 1417.5,749.6 1419.9,753.0 1422.3,746.9 1424.6,750.9 1427.0,758.9 1429.4,761.1 1431.7,761.2 1434.1,763.1 1436.5,765.5 1438.8,768.1 1441.2,769.0 1443.5,772.5 1445.9,771.8 1448.3,776.2 1450.6,780.5 1453.0,780.0 1455.3,776.1 1457.7,774.9 1460.0,776.7 1462.3,780.6 1464.7,770.1 1467.0,778.4 1469.3,780.5 1471.7,778.1 1474.0,781.7 1476.3,781.9 1478.7,779.0 1481.0,777.0 1483.3,775.1 1485.7,778.9 1488.0,775.7 1490.3,778.2 1492.7,776.3 1495.0,777.6 1497.4,774.4 1499.7,773.2 1502.1,778.1 1504.5,779.3 1506.8,776.7 1509.2,781.2 1511.5,783.6 1513.9,784.8 1516.3,782.2 1518.6,785.2 1521.0,785.5 1523.2,784.7 1525.5,784.2 1527.8,784.0 1530.0,780.4 1532.2,782.1 1534.5,775.0" fill="none" stroke="#3871dc" stroke-width="2.2" stroke-linejoin="round"/><polygon points="152,668.2 152.0,578.0 154.4,578.9 156.8,579.0 159.2,588.7 161.6,588.6 164.0,593.6 166.4,591.3 168.8,587.8 171.2,589.9 173.6,589.0 175.9,593.3 178.3,595.3 180.7,593.2 183.1,590.2 185.5,592.8 187.9,589.4 190.3,590.6 192.7,586.4 195.1,588.2 197.5,589.9 199.9,588.2 202.3,596.9 204.7,596.3 207.1,593.1 209.5,595.4 211.9,592.9 214.3,599.4 216.7,601.7 219.1,598.8 221.4,598.9 223.8,599.0 226.2,600.1 228.6,602.8 231.0,601.5 233.4,606.0 235.8,608.4 238.2,611.3 240.6,612.3 243.0,615.0 245.5,617.1 247.9,609.1 250.4,603.6 252.9,605.2 255.3,600.8 257.8,598.6 260.3,598.7 262.7,590.0 265.2,589.6 267.7,590.1 270.1,593.2 272.6,590.2 275.1,585.5 277.5,581.6 280.0,581.0 282.4,583.4 284.8,583.4 287.2,584.3 289.5,582.9 291.9,591.8 294.3,593.9 296.7,588.4 299.1,593.1 301.5,592.2 303.8,593.5 306.2,593.7 308.6,594.5 311.0,594.0 313.5,596.0 315.9,590.7 318.4,589.0 320.8,586.7 323.3,582.9 325.8,581.5 328.2,580.5 330.7,578.3 333.2,572.9 335.6,570.0 338.1,572.6 340.5,570.1 343.0,568.0 345.3,568.9 347.7,565.6 350.0,565.2 352.3,565.6 354.7,571.1 357.0,569.7 359.3,565.1 361.7,572.9 364.0,572.2 366.3,572.8 368.7,575.9 371.0,574.7 373.3,574.7 375.7,577.5 378.0,575.2 380.3,577.6 382.7,571.3 385.0,578.0 387.5,577.8 390.0,579.8 392.5,586.7 395.0,591.0 397.4,589.9 399.8,587.7 402.2,591.9 404.5,585.3 406.9,578.9 409.3,580.2 411.7,573.5 414.1,572.6 416.5,566.3 418.8,565.0 421.2,565.8 423.6,565.6 426.0,557.0 428.5,555.7 430.9,560.4 433.4,565.4 435.8,564.4 438.3,572.2 440.8,568.9 443.2,568.3 445.7,572.1 448.2,576.5 450.6,577.0 453.1,577.9 455.5,581.6 458.0,581.0 460.4,585.9 462.7,586.9 465.1,584.5 467.5,581.1 469.8,575.9 472.2,578.7 474.5,576.2 476.9,575.2 479.3,576.1 481.6,572.5 484.0,574.0 486.4,574.0 488.7,567.6 491.1,564.4 493.5,568.9 495.8,571.5 498.2,568.2 500.5,565.9 502.9,560.6 505.3,567.0 507.6,560.3 510.0,563.0 512.3,563.5 514.7,567.0 517.0,566.3 519.3,573.1 521.7,566.2 524.0,573.6 526.3,568.9 528.7,568.9 531.0,570.0 533.3,567.2 535.6,566.2 537.9,563.4 540.1,565.0 542.4,563.9 544.7,558.8 547.0,560.0 549.5,567.1 552.0,572.7 554.5,578.5 557.0,576.0 559.5,571.2 561.9,570.5 564.4,570.4 566.8,565.4 569.3,560.6 571.8,560.8 574.2,557.2 576.7,548.7 579.2,548.8 581.6,547.2 584.1,541.8 586.5,537.5 589.0,536.5 591.4,533.7 593.8,532.3 596.2,537.2 598.5,528.4 600.9,525.4 603.3,524.3 605.7,525.3 608.1,523.3 610.5,523.3 612.8,519.4 615.2,516.9 617.6,519.7 620.0,513.0 622.4,514.0 624.7,513.4 627.1,517.4 629.5,517.4 631.8,517.0 634.2,520.1 636.5,523.6 638.9,523.8 641.3,521.7 643.6,526.7 646.0,526.0 648.4,523.6 650.9,525.0 653.3,523.4 655.7,519.6 658.1,523.8 660.6,519.8 663.0,516.0 665.4,516.7 667.9,515.1 670.3,516.2 672.7,516.5 675.1,512.6 677.6,510.9 680.0,510.0 682.4,511.4 684.8,515.2 687.2,512.7 689.6,517.9 692.0,514.5 694.4,518.1 696.8,517.6 699.2,522.9 701.6,524.7 704.0,526.0 706.3,519.7 708.7,515.4 711.0,508.7 713.3,508.7 715.7,509.2 718.0,502.0 720.3,495.1 722.7,490.0 725.0,489.0 727.3,487.7 729.6,487.5 731.9,486.8 734.1,484.4 736.4,484.2 738.7,482.0 741.0,484.0 743.4,484.9 745.9,484.3 748.3,489.8 750.7,486.7 753.2,484.3 755.6,487.6 758.0,485.0 760.5,487.6 762.9,483.6 765.3,481.2 767.8,489.2 770.2,487.8 772.6,485.2 775.1,479.1 777.5,489.3 779.9,490.5 782.4,489.8 784.8,488.1 787.2,490.0 789.7,486.7 792.1,493.6 794.5,489.0 797.0,491.8 799.4,491.8 801.8,493.4 804.3,495.2 806.7,496.9 809.1,491.9 811.6,496.9 814.0,497.0 816.4,495.9 818.8,498.2 821.2,490.3 823.5,487.1 825.9,482.1 828.3,483.3 830.7,477.2 833.1,474.1 835.5,467.7 837.8,470.4 840.2,468.3 842.6,465.0 845.0,466.0 847.5,464.2 849.9,456.9 852.4,464.3 854.8,460.3 857.3,466.2 859.8,467.3 862.2,465.4 864.7,465.6 867.2,461.8 869.6,465.1 872.1,463.7 874.5,469.6 877.0,466.0 879.3,465.6 881.7,472.8 884.0,477.4 886.3,473.9 888.7,480.7 891.0,478.0 893.3,485.8 895.7,487.0 898.0,489.0 900.3,483.8 902.7,481.4 905.0,485.1 907.3,477.3 909.7,478.3 912.0,475.4 914.3,468.7 916.7,468.4 919.0,468.5 921.3,469.0 923.7,472.2 926.0,471.0 928.3,468.7 930.7,471.0 933.0,472.3 935.3,474.5 937.7,477.0 940.0,474.0 942.4,472.2 944.8,476.0 947.2,475.3 949.5,477.1 951.9,475.3 954.3,470.5 956.7,470.6 959.1,465.3 961.5,465.6 963.8,468.8 966.2,469.7 968.6,467.1 971.0,466.0 973.5,469.6 975.9,471.6 978.4,473.6 980.9,470.4 983.3,475.0 985.8,473.0 988.3,479.0 990.7,477.1 993.2,478.5 995.7,484.0 998.1,481.2 1000.6,488.7 1003.1,487.4 1005.5,489.7 1008.0,492.0 1010.4,491.2 1012.8,493.6 1015.1,487.9 1017.5,493.6 1019.9,495.2 1022.3,492.6 1024.7,497.6 1027.0,492.2 1029.4,496.7 1031.8,495.7 1034.2,495.2 1036.6,497.1 1039.0,497.4 1041.3,501.7 1043.7,499.2 1046.1,498.8 1048.5,503.4 1050.9,501.6 1053.2,500.8 1055.6,500.4 1058.0,500.0 1060.4,495.5 1062.8,494.9 1065.2,495.1 1067.6,498.8 1070.0,490.1 1072.4,492.0 1074.8,492.5 1077.2,490.1 1079.6,484.9 1082.0,482.5 1084.4,485.9 1086.8,481.7 1089.2,480.7 1091.6,476.3 1094.0,473.7 1096.4,470.2 1098.8,472.7 1101.2,475.3 1103.6,471.3 1106.0,475.6 1108.4,472.1 1110.8,473.8 1113.2,471.1 1115.6,475.5 1118.0,476.0 1120.5,476.2 1122.9,476.7 1125.4,482.3 1127.8,475.9 1130.3,482.1 1132.8,477.1 1135.2,481.9 1137.7,480.3 1140.2,486.7 1142.6,485.4 1145.1,481.6 1147.5,484.1 1150.0,487.0 1152.3,485.8 1154.7,485.6 1157.0,478.0 1159.3,475.8 1161.7,474.0 1164.0,472.5 1166.3,466.6 1168.7,464.8 1171.0,461.0 1173.3,457.7 1175.7,450.9 1178.0,450.0 1180.4,461.1 1182.8,462.5 1185.2,467.4 1187.6,473.6 1190.0,472.3 1192.4,474.5 1194.8,477.3 1197.2,482.1 1199.6,485.4 1202.0,487.0 1204.3,485.3 1206.7,482.8 1209.0,487.2 1211.4,483.7 1213.8,483.3 1216.1,476.8 1218.5,483.6 1220.8,476.1 1223.2,475.6 1225.5,476.0 1227.9,479.3 1230.2,480.9 1232.6,480.8 1235.0,485.8 1237.4,485.8 1239.8,493.1 1242.1,493.3 1244.5,497.4 1246.9,500.9 1249.2,498.7 1251.6,498.5 1254.0,503.0 1256.4,504.8 1258.9,507.1 1261.3,508.0 1263.7,509.8 1266.1,508.3 1268.6,512.9 1271.0,514.0 1273.4,510.6 1275.9,504.5 1278.3,508.5 1280.7,510.6 1283.1,518.5 1285.6,519.5 1288.0,520.0 1290.4,519.9 1292.7,520.1 1295.1,520.4 1297.4,521.5 1299.8,519.2 1302.1,515.0 1304.5,520.5 1306.8,516.8 1309.2,516.4 1311.5,513.4 1313.9,511.3 1316.2,510.9 1318.6,514.7 1320.9,511.3 1323.3,511.1 1325.6,508.9 1328.0,510.5 1330.6,506.8 1333.2,508.8 1335.8,503.1 1338.4,499.9 1341.0,495.0 1343.4,493.9 1345.9,499.7 1348.3,498.3 1350.8,497.3 1353.2,494.8 1355.7,499.9 1358.1,502.2 1360.6,500.0 1363.0,499.9 1365.4,500.1 1367.9,500.1 1370.3,501.1 1372.8,499.6 1375.2,494.8 1377.7,499.3 1380.1,499.0 1382.6,496.5 1385.0,500.0 1387.4,497.1 1389.8,490.9 1392.1,487.5 1394.5,481.8 1396.9,479.1 1399.3,479.7 1401.7,479.2 1404.0,476.8 1406.4,472.5 1408.8,469.5 1411.2,469.9 1413.6,468.5 1416.0,465.9 1418.3,466.2 1420.7,466.0 1423.1,461.1 1425.5,462.1 1427.9,459.2 1430.2,451.7 1432.6,456.9 1435.0,453.0 1437.3,454.6 1439.7,454.2 1442.0,455.7 1444.4,451.4 1446.8,459.2 1449.1,455.7 1451.5,467.4 1453.8,462.4 1456.2,466.8 1458.5,466.0 1460.8,470.8 1463.2,475.5 1465.5,474.5 1467.9,478.7 1470.2,481.9 1472.6,476.4 1475.0,482.2 1477.3,479.7 1479.7,484.2 1482.0,484.0 1484.4,479.9 1486.8,481.8 1489.2,478.1 1491.7,472.8 1494.1,469.9 1496.5,467.3 1498.9,463.9 1501.3,460.0 1503.8,454.5 1506.2,453.8 1508.6,442.9 1511.0,442.0 1513.3,443.7 1515.7,451.5 1518.0,450.1 1520.4,451.5 1522.8,455.4 1525.1,459.8 1527.5,464.0 1529.8,463.5 1532.2,470.4 1534.5,471.0 1534.5,668.2" fill="#e0393e" fill-opacity="0.22"/><polyline points="152.0,578.0 154.4,578.9 156.8,579.0 159.2,588.7 161.6,588.6 164.0,593.6 166.4,591.3 168.8,587.8 171.2,589.9 173.6,589.0 175.9,593.3 178.3,595.3 180.7,593.2 183.1,590.2 185.5,592.8 187.9,589.4 190.3,590.6 192.7,586.4 195.1,588.2 197.5,589.9 199.9,588.2 202.3,596.9 204.7,596.3 207.1,593.1 209.5,595.4 211.9,592.9 214.3,599.4 216.7,601.7 219.1,598.8 221.4,598.9 223.8,599.0 226.2,600.1 228.6,602.8 231.0,601.5 233.4,606.0 235.8,608.4 238.2,611.3 240.6,612.3 243.0,615.0 245.5,617.1 247.9,609.1 250.4,603.6 252.9,605.2 255.3,600.8 257.8,598.6 260.3,598.7 262.7,590.0 265.2,589.6 267.7,590.1 270.1,593.2 272.6,590.2 275.1,585.5 277.5,581.6 280.0,581.0 282.4,583.4 284.8,583.4 287.2,584.3 289.5,582.9 291.9,591.8 294.3,593.9 296.7,588.4 299.1,593.1 301.5,592.2 303.8,593.5 306.2,593.7 308.6,594.5 311.0,594.0 313.5,596.0 315.9,590.7 318.4,589.0 320.8,586.7 323.3,582.9 325.8,581.5 328.2,580.5 330.7,578.3 333.2,572.9 335.6,570.0 338.1,572.6 340.5,570.1 343.0,568.0 345.3,568.9 347.7,565.6 350.0,565.2 352.3,565.6 354.7,571.1 357.0,569.7 359.3,565.1 361.7,572.9 364.0,572.2 366.3,572.8 368.7,575.9 371.0,574.7 373.3,574.7 375.7,577.5 378.0,575.2 380.3,577.6 382.7,571.3 385.0,578.0 387.5,577.8 390.0,579.8 392.5,586.7 395.0,591.0 397.4,589.9 399.8,587.7 402.2,591.9 404.5,585.3 406.9,578.9 409.3,580.2 411.7,573.5 414.1,572.6 416.5,566.3 418.8,565.0 421.2,565.8 423.6,565.6 426.0,557.0 428.5,555.7 430.9,560.4 433.4,565.4 435.8,564.4 438.3,572.2 440.8,568.9 443.2,568.3 445.7,572.1 448.2,576.5 450.6,577.0 453.1,577.9 455.5,581.6 458.0,581.0 460.4,585.9 462.7,586.9 465.1,584.5 467.5,581.1 469.8,575.9 472.2,578.7 474.5,576.2 476.9,575.2 479.3,576.1 481.6,572.5 484.0,574.0 486.4,574.0 488.7,567.6 491.1,564.4 493.5,568.9 495.8,571.5 498.2,568.2 500.5,565.9 502.9,560.6 505.3,567.0 507.6,560.3 510.0,563.0 512.3,563.5 514.7,567.0 517.0,566.3 519.3,573.1 521.7,566.2 524.0,573.6 526.3,568.9 528.7,568.9 531.0,570.0 533.3,567.2 535.6,566.2 537.9,563.4 540.1,565.0 542.4,563.9 544.7,558.8 547.0,560.0 549.5,567.1 552.0,572.7 554.5,578.5 557.0,576.0 559.5,571.2 561.9,570.5 564.4,570.4 566.8,565.4 569.3,560.6 571.8,560.8 574.2,557.2 576.7,548.7 579.2,548.8 581.6,547.2 584.1,541.8 586.5,537.5 589.0,536.5 591.4,533.7 593.8,532.3 596.2,537.2 598.5,528.4 600.9,525.4 603.3,524.3 605.7,525.3 608.1,523.3 610.5,523.3 612.8,519.4 615.2,516.9 617.6,519.7 620.0,513.0 622.4,514.0 624.7,513.4 627.1,517.4 629.5,517.4 631.8,517.0 634.2,520.1 636.5,523.6 638.9,523.8 641.3,521.7 643.6,526.7 646.0,526.0 648.4,523.6 650.9,525.0 653.3,523.4 655.7,519.6 658.1,523.8 660.6,519.8 663.0,516.0 665.4,516.7 667.9,515.1 670.3,516.2 672.7,516.5 675.1,512.6 677.6,510.9 680.0,510.0 682.4,511.4 684.8,515.2 687.2,512.7 689.6,517.9 692.0,514.5 694.4,518.1 696.8,517.6 699.2,522.9 701.6,524.7 704.0,526.0 706.3,519.7 708.7,515.4 711.0,508.7 713.3,508.7 715.7,509.2 718.0,502.0 720.3,495.1 722.7,490.0 725.0,489.0 727.3,487.7 729.6,487.5 731.9,486.8 734.1,484.4 736.4,484.2 738.7,482.0 741.0,484.0 743.4,484.9 745.9,484.3 748.3,489.8 750.7,486.7 753.2,484.3 755.6,487.6 758.0,485.0 760.5,487.6 762.9,483.6 765.3,481.2 767.8,489.2 770.2,487.8 772.6,485.2 775.1,479.1 777.5,489.3 779.9,490.5 782.4,489.8 784.8,488.1 787.2,490.0 789.7,486.7 792.1,493.6 794.5,489.0 797.0,491.8 799.4,491.8 801.8,493.4 804.3,495.2 806.7,496.9 809.1,491.9 811.6,496.9 814.0,497.0 816.4,495.9 818.8,498.2 821.2,490.3 823.5,487.1 825.9,482.1 828.3,483.3 830.7,477.2 833.1,474.1 835.5,467.7 837.8,470.4 840.2,468.3 842.6,465.0 845.0,466.0 847.5,464.2 849.9,456.9 852.4,464.3 854.8,460.3 857.3,466.2 859.8,467.3 862.2,465.4 864.7,465.6 867.2,461.8 869.6,465.1 872.1,463.7 874.5,469.6 877.0,466.0 879.3,465.6 881.7,472.8 884.0,477.4 886.3,473.9 888.7,480.7 891.0,478.0 893.3,485.8 895.7,487.0 898.0,489.0 900.3,483.8 902.7,481.4 905.0,485.1 907.3,477.3 909.7,478.3 912.0,475.4 914.3,468.7 916.7,468.4 919.0,468.5 921.3,469.0 923.7,472.2 926.0,471.0 928.3,468.7 930.7,471.0 933.0,472.3 935.3,474.5 937.7,477.0 940.0,474.0 942.4,472.2 944.8,476.0 947.2,475.3 949.5,477.1 951.9,475.3 954.3,470.5 956.7,470.6 959.1,465.3 961.5,465.6 963.8,468.8 966.2,469.7 968.6,467.1 971.0,466.0 973.5,469.6 975.9,471.6 978.4,473.6 980.9,470.4 983.3,475.0 985.8,473.0 988.3,479.0 990.7,477.1 993.2,478.5 995.7,484.0 998.1,481.2 1000.6,488.7 1003.1,487.4 1005.5,489.7 1008.0,492.0 1010.4,491.2 1012.8,493.6 1015.1,487.9 1017.5,493.6 1019.9,495.2 1022.3,492.6 1024.7,497.6 1027.0,492.2 1029.4,496.7 1031.8,495.7 1034.2,495.2 1036.6,497.1 1039.0,497.4 1041.3,501.7 1043.7,499.2 1046.1,498.8 1048.5,503.4 1050.9,501.6 1053.2,500.8 1055.6,500.4 1058.0,500.0 1060.4,495.5 1062.8,494.9 1065.2,495.1 1067.6,498.8 1070.0,490.1 1072.4,492.0 1074.8,492.5 1077.2,490.1 1079.6,484.9 1082.0,482.5 1084.4,485.9 1086.8,481.7 1089.2,480.7 1091.6,476.3 1094.0,473.7 1096.4,470.2 1098.8,472.7 1101.2,475.3 1103.6,471.3 1106.0,475.6 1108.4,472.1 1110.8,473.8 1113.2,471.1 1115.6,475.5 1118.0,476.0 1120.5,476.2 1122.9,476.7 1125.4,482.3 1127.8,475.9 1130.3,482.1 1132.8,477.1 1135.2,481.9 1137.7,480.3 1140.2,486.7 1142.6,485.4 1145.1,481.6 1147.5,484.1 1150.0,487.0 1152.3,485.8 1154.7,485.6 1157.0,478.0 1159.3,475.8 1161.7,474.0 1164.0,472.5 1166.3,466.6 1168.7,464.8 1171.0,461.0 1173.3,457.7 1175.7,450.9 1178.0,450.0 1180.4,461.1 1182.8,462.5 1185.2,467.4 1187.6,473.6 1190.0,472.3 1192.4,474.5 1194.8,477.3 1197.2,482.1 1199.6,485.4 1202.0,487.0 1204.3,485.3 1206.7,482.8 1209.0,487.2 1211.4,483.7 1213.8,483.3 1216.1,476.8 1218.5,483.6 1220.8,476.1 1223.2,475.6 1225.5,476.0 1227.9,479.3 1230.2,480.9 1232.6,480.8 1235.0,485.8 1237.4,485.8 1239.8,493.1 1242.1,493.3 1244.5,497.4 1246.9,500.9 1249.2,498.7 1251.6,498.5 1254.0,503.0 1256.4,504.8 1258.9,507.1 1261.3,508.0 1263.7,509.8 1266.1,508.3 1268.6,512.9 1271.0,514.0 1273.4,510.6 1275.9,504.5 1278.3,508.5 1280.7,510.6 1283.1,518.5 1285.6,519.5 1288.0,520.0 1290.4,519.9 1292.7,520.1 1295.1,520.4 1297.4,521.5 1299.8,519.2 1302.1,515.0 1304.5,520.5 1306.8,516.8 1309.2,516.4 1311.5,513.4 1313.9,511.3 1316.2,510.9 1318.6,514.7 1320.9,511.3 1323.3,511.1 1325.6,508.9 1328.0,510.5 1330.6,506.8 1333.2,508.8 1335.8,503.1 1338.4,499.9 1341.0,495.0 1343.4,493.9 1345.9,499.7 1348.3,498.3 1350.8,497.3 1353.2,494.8 1355.7,499.9 1358.1,502.2 1360.6,500.0 1363.0,499.9 1365.4,500.1 1367.9,500.1 1370.3,501.1 1372.8,499.6 1375.2,494.8 1377.7,499.3 1380.1,499.0 1382.6,496.5 1385.0,500.0 1387.4,497.1 1389.8,490.9 1392.1,487.5 1394.5,481.8 1396.9,479.1 1399.3,479.7 1401.7,479.2 1404.0,476.8 1406.4,472.5 1408.8,469.5 1411.2,469.9 1413.6,468.5 1416.0,465.9 1418.3,466.2 1420.7,466.0 1423.1,461.1 1425.5,462.1 1427.9,459.2 1430.2,451.7 1432.6,456.9 1435.0,453.0 1437.3,454.6 1439.7,454.2 1442.0,455.7 1444.4,451.4 1446.8,459.2 1449.1,455.7 1451.5,467.4 1453.8,462.4 1456.2,466.8 1458.5,466.0 1460.8,470.8 1463.2,475.5 1465.5,474.5 1467.9,478.7 1470.2,481.9 1472.6,476.4 1475.0,482.2 1477.3,479.7 1479.7,484.2 1482.0,484.0 1484.4,479.9 1486.8,481.8 1489.2,478.1 1491.7,472.8 1494.1,469.9 1496.5,467.3 1498.9,463.9 1501.3,460.0 1503.8,454.5 1506.2,453.8 1508.6,442.9 1511.0,442.0 1513.3,443.7 1515.7,451.5 1518.0,450.1 1520.4,451.5 1522.8,455.4 1525.1,459.8 1527.5,464.0 1529.8,463.5 1532.2,470.4 1534.5,471.0" fill="none" stroke="#e0393e" stroke-width="2.2" stroke-linejoin="round"/><polygon points="152,668.2 152.0,583.7 154.4,582.9 156.8,585.0 159.2,587.3 161.6,594.9 164.0,591.9 166.4,589.2 168.8,594.1 171.2,597.2 173.6,593.4 176.0,597.4 178.4,595.7 180.8,596.7 183.2,599.0 185.6,601.9 188.0,603.7 190.4,604.4 192.8,609.0 195.2,610.9 197.6,613.2 200.0,618.8 202.4,615.9 204.8,615.7 207.2,612.7 209.6,619.8 212.0,623.0 214.4,622.5 216.9,623.1 219.3,622.1 221.7,619.2 224.1,619.1 226.6,618.1 229.0,620.5 231.4,616.3 233.9,615.3 236.3,616.6 238.7,608.1 241.1,607.7 243.6,606.4 246.0,601.9 248.4,606.6 250.9,601.3 253.3,601.6 255.7,601.0 258.1,600.8 260.6,595.6 263.0,594.2 265.4,590.2 267.9,588.6 270.3,592.6 272.7,589.6 275.1,585.5 277.6,588.5 280.0,583.7 282.4,592.4 284.7,587.3 287.1,584.1 289.5,589.6 291.8,585.7 294.2,585.0 296.5,585.8 298.9,584.8 301.3,586.5 303.6,583.8 306.0,588.4 308.4,592.3 310.7,588.8 313.1,594.7 315.5,594.1 317.8,594.6 320.2,606.3 322.5,604.7 324.9,606.9 327.3,605.4 329.6,613.2 332.0,610.0 334.3,610.1 336.7,607.4 339.0,605.2 341.3,605.0 343.7,603.1 346.0,602.4 348.3,602.9 350.7,597.4 353.0,599.0 355.4,602.7 357.7,604.4 360.1,599.0 362.4,600.0 364.8,605.1 367.1,612.5 369.4,611.6 371.8,612.9 374.1,613.8 376.5,615.0 378.9,621.1 381.2,620.3 383.6,623.6 385.9,624.8 388.2,625.9 390.6,626.4 392.9,631.2 395.3,635.8 397.6,631.1 400.0,636.0 402.4,640.4 404.8,639.4 407.2,640.8 409.6,643.3 412.0,642.5 414.5,642.1 416.9,642.6 419.3,648.8 421.7,647.7 424.1,647.6 426.5,646.5 428.9,641.9 431.3,646.9 433.7,646.9 436.0,649.7 438.4,649.3 440.8,652.7 443.2,646.8 445.6,651.4 448.0,654.8 450.4,645.6 452.8,649.3 455.1,646.4 457.5,642.4 459.9,648.6 462.3,648.6 464.7,646.6 467.1,645.2 469.5,638.3 471.8,640.4 474.2,643.5 476.6,643.2 479.0,641.0 481.4,643.4 483.8,643.2 486.2,644.7 488.5,646.8 490.9,645.8 493.3,647.9 495.7,648.6 498.1,646.2 500.5,649.2 502.8,652.0 505.2,654.8 507.6,660.1 510.0,662.0 512.4,662.7 514.9,667.2 517.3,668.2 519.8,664.3 522.2,667.9 524.6,666.6 527.1,671.1 529.5,669.3 531.9,670.2 534.4,672.7 536.8,676.1 539.3,678.9 541.7,683.0 544.2,680.3 546.6,683.1 549.1,684.3 551.6,683.6 554.0,682.6 556.5,679.3 559.0,682.4 561.4,679.3 563.9,678.0 566.3,678.1 568.8,676.7 571.3,678.8 573.7,684.7 576.2,679.3 578.7,678.4 581.1,678.6 583.6,678.0 585.9,677.2 588.2,681.0 590.6,679.4 592.9,684.5 595.2,681.3 597.5,687.9 599.9,682.0 602.2,684.5 604.5,688.0 606.9,688.5 609.3,686.8 611.7,689.6 614.0,691.9 616.4,692.8 618.8,691.4 621.2,694.0 623.6,696.8 626.0,703.0 628.4,696.3 630.8,697.0 633.1,697.3 635.5,693.0 637.9,697.9 640.3,697.6 642.7,700.9 645.1,701.8 647.5,698.7 649.8,701.3 652.2,698.6 654.6,701.4 657.0,699.0 659.4,699.2 661.7,693.4 664.0,698.5 666.4,696.0 668.8,694.0 671.1,690.5 673.5,698.3 675.8,690.4 678.1,694.3 680.5,690.7 682.9,689.5 685.2,694.0 687.5,696.0 689.9,693.3 692.2,687.7 694.6,690.1 697.0,688.4 699.3,688.9 701.6,682.4 704.0,683.0 706.3,674.9 708.7,673.3 711.0,664.5 713.3,658.9 715.7,661.2 718.0,653.3 720.3,651.0 722.7,648.3 725.0,644.0 727.3,647.3 729.7,643.7 732.0,642.7 734.3,648.0 736.7,647.3 739.0,645.0 741.3,648.9 743.7,647.0 746.0,654.4 748.3,651.7 750.7,648.7 753.0,653.2 755.3,655.0 757.7,657.4 760.0,660.3 762.3,658.2 764.7,660.9 767.0,662.0 769.5,658.2 771.9,661.0 774.4,657.1 776.8,664.8 779.3,662.4 781.7,665.1 784.2,663.9 786.6,663.5 789.1,665.8 791.5,662.4 794.0,665.9 796.4,659.2 798.9,662.3 801.3,657.8 803.8,661.8 806.2,659.5 808.7,657.0 811.1,654.7 813.5,654.6 815.9,655.6 818.3,656.0 820.8,653.2 823.2,655.2 825.6,651.6 828.0,649.8 830.4,656.9 832.8,655.4 835.2,646.8 837.6,651.9 840.1,650.7 842.5,646.8 844.9,643.2 847.3,648.7 849.7,648.3 852.1,645.7 854.5,647.0 856.9,641.8 859.4,639.6 861.8,646.8 864.2,649.6 866.6,642.2 869.0,646.5 871.4,644.5 873.9,649.8 876.3,643.9 878.8,648.9 881.2,653.5 883.6,650.2 886.1,649.8 888.5,651.9 890.9,657.1 893.4,655.9 895.8,651.8 898.2,653.7 900.7,649.9 903.1,650.9 905.6,653.2 908.0,657.0 910.5,658.6 912.9,659.7 915.4,657.6 917.8,667.2 920.3,667.1 922.8,666.4 925.2,669.7 927.7,670.5 930.2,675.7 932.6,672.2 935.1,674.5 937.5,675.3 940.0,675.5 942.4,677.2 944.8,674.1 947.2,677.8 949.5,676.0 951.9,678.6 954.3,676.6 956.7,682.5 959.1,680.8 961.5,681.1 963.8,685.3 966.2,684.7 968.6,683.8 971.0,683.0 973.4,684.8 975.8,680.0 978.2,683.6 980.6,684.0 983.0,681.7 985.5,682.9 987.9,686.3 990.3,680.4 992.7,682.4 995.1,678.8 997.5,677.7 999.9,671.0 1002.3,678.3 1004.7,676.7 1007.1,687.0 1009.5,683.7 1012.0,685.8 1014.4,681.9 1016.8,683.8 1019.2,679.9 1021.6,682.7 1024.0,683.0 1026.3,681.8 1028.7,684.9 1031.0,681.1 1033.4,676.9 1035.8,677.7 1038.1,676.2 1040.5,677.6 1042.8,676.2 1045.2,670.9 1047.5,662.0 1049.8,668.6 1052.2,668.3 1054.5,661.7 1056.9,660.6 1059.2,657.8 1061.6,653.3 1064.0,654.2 1066.3,655.4 1068.7,652.0 1071.0,649.0 1073.3,647.3 1075.7,649.6 1078.0,646.5 1080.3,647.7 1082.7,651.5 1085.0,656.7 1087.3,654.1 1089.7,656.1 1092.0,657.2 1094.3,656.8 1096.7,654.9 1099.0,659.9 1101.3,661.2 1103.7,659.9 1106.0,660.6 1108.3,664.5 1110.7,661.2 1113.0,665.0 1115.3,667.7 1117.7,665.1 1120.0,664.7 1122.4,666.3 1124.8,672.1 1127.1,677.1 1129.5,678.9 1131.8,677.4 1134.2,678.0 1136.5,681.5 1138.8,687.6 1141.2,694.0 1143.5,689.9 1145.9,693.9 1148.2,700.8 1150.6,699.4 1153.0,701.7 1155.3,703.8 1157.7,703.2 1160.0,707.0 1162.3,707.1 1164.7,712.3 1167.0,708.1 1169.3,707.9 1171.7,702.6 1174.0,705.7 1176.3,706.6 1178.7,708.2 1181.0,704.9 1183.3,708.3 1185.7,714.5 1188.0,708.5 1190.3,703.2 1192.7,699.8 1195.0,697.6 1197.3,697.0 1199.7,693.8 1202.0,696.5 1204.4,696.8 1206.9,698.4 1209.3,693.9 1211.8,691.6 1214.2,693.4 1216.6,692.1 1219.1,689.6 1221.5,686.6 1224.0,688.8 1226.4,689.9 1228.8,682.4 1231.3,683.0 1233.7,680.5 1236.2,681.4 1238.6,678.0 1241.0,682.1 1243.3,681.1 1245.7,678.5 1248.0,683.2 1250.4,689.8 1252.7,688.4 1255.1,690.8 1257.4,695.0 1259.8,694.4 1262.2,696.2 1264.5,697.6 1266.9,696.9 1269.2,701.4 1271.6,695.8 1273.9,698.6 1276.3,698.0 1278.6,693.9 1281.0,698.4 1283.3,697.2 1285.7,696.5 1288.1,694.4 1290.5,696.6 1292.8,699.1 1295.2,699.3 1297.6,701.0 1300.0,701.7 1302.3,702.4 1304.7,701.3 1307.1,697.6 1309.5,701.3 1311.8,706.8 1314.2,705.8 1316.6,709.2 1319.0,709.1 1321.4,708.9 1323.7,710.4 1326.1,707.8 1328.5,707.9 1330.9,712.0 1333.2,707.3 1335.6,706.4 1338.0,707.0 1340.4,705.0 1342.9,700.4 1345.3,704.5 1347.7,706.6 1350.1,705.9 1352.6,707.7 1355.0,702.4 1357.4,702.1 1359.9,704.6 1362.3,703.0 1364.7,698.5 1367.1,697.9 1369.6,695.3 1372.0,695.1 1374.4,692.7 1376.9,687.0 1379.3,682.6 1381.7,683.2 1384.1,681.9 1386.6,678.2 1389.0,677.8 1391.4,673.2 1393.9,675.2 1396.3,672.9 1398.7,673.1 1401.1,670.4 1403.6,667.0 1406.0,667.6 1408.4,665.5 1410.9,660.1 1413.3,665.3 1415.7,656.1 1418.1,662.3 1420.6,656.6 1423.0,653.5 1425.4,654.3 1427.9,657.5 1430.3,649.1 1432.7,653.8 1435.1,649.1 1437.6,652.6 1440.0,650.9 1442.4,650.1 1444.9,652.4 1447.3,652.7 1449.7,651.6 1452.1,648.5 1454.6,652.0 1457.0,650.5 1459.4,648.4 1461.9,647.2 1464.3,653.4 1466.7,650.2 1469.1,651.6 1471.6,650.6 1474.0,646.7 1476.3,646.6 1478.7,651.2 1481.0,652.0 1483.3,650.6 1485.7,653.0 1488.0,656.7 1490.3,656.9 1492.7,656.0 1495.0,665.0 1497.4,663.2 1499.8,659.5 1502.2,660.4 1504.7,657.0 1507.1,648.1 1509.5,646.6 1511.9,647.7 1514.3,642.0 1516.8,636.7 1519.2,635.0 1521.6,633.1 1524.0,628.0 1526.6,627.6 1529.2,635.5 1531.9,630.8 1534.5,633.6 1534.5,668.2" fill="#cfc39a" fill-opacity="0.22"/><polyline points="152.0,583.7 154.4,582.9 156.8,585.0 159.2,587.3 161.6,594.9 164.0,591.9 166.4,589.2 168.8,594.1 171.2,597.2 173.6,593.4 176.0,597.4 178.4,595.7 180.8,596.7 183.2,599.0 185.6,601.9 188.0,603.7 190.4,604.4 192.8,609.0 195.2,610.9 197.6,613.2 200.0,618.8 202.4,615.9 204.8,615.7 207.2,612.7 209.6,619.8 212.0,623.0 214.4,622.5 216.9,623.1 219.3,622.1 221.7,619.2 224.1,619.1 226.6,618.1 229.0,620.5 231.4,616.3 233.9,615.3 236.3,616.6 238.7,608.1 241.1,607.7 243.6,606.4 246.0,601.9 248.4,606.6 250.9,601.3 253.3,601.6 255.7,601.0 258.1,600.8 260.6,595.6 263.0,594.2 265.4,590.2 267.9,588.6 270.3,592.6 272.7,589.6 275.1,585.5 277.6,588.5 280.0,583.7 282.4,592.4 284.7,587.3 287.1,584.1 289.5,589.6 291.8,585.7 294.2,585.0 296.5,585.8 298.9,584.8 301.3,586.5 303.6,583.8 306.0,588.4 308.4,592.3 310.7,588.8 313.1,594.7 315.5,594.1 317.8,594.6 320.2,606.3 322.5,604.7 324.9,606.9 327.3,605.4 329.6,613.2 332.0,610.0 334.3,610.1 336.7,607.4 339.0,605.2 341.3,605.0 343.7,603.1 346.0,602.4 348.3,602.9 350.7,597.4 353.0,599.0 355.4,602.7 357.7,604.4 360.1,599.0 362.4,600.0 364.8,605.1 367.1,612.5 369.4,611.6 371.8,612.9 374.1,613.8 376.5,615.0 378.9,621.1 381.2,620.3 383.6,623.6 385.9,624.8 388.2,625.9 390.6,626.4 392.9,631.2 395.3,635.8 397.6,631.1 400.0,636.0 402.4,640.4 404.8,639.4 407.2,640.8 409.6,643.3 412.0,642.5 414.5,642.1 416.9,642.6 419.3,648.8 421.7,647.7 424.1,647.6 426.5,646.5 428.9,641.9 431.3,646.9 433.7,646.9 436.0,649.7 438.4,649.3 440.8,652.7 443.2,646.8 445.6,651.4 448.0,654.8 450.4,645.6 452.8,649.3 455.1,646.4 457.5,642.4 459.9,648.6 462.3,648.6 464.7,646.6 467.1,645.2 469.5,638.3 471.8,640.4 474.2,643.5 476.6,643.2 479.0,641.0 481.4,643.4 483.8,643.2 486.2,644.7 488.5,646.8 490.9,645.8 493.3,647.9 495.7,648.6 498.1,646.2 500.5,649.2 502.8,652.0 505.2,654.8 507.6,660.1 510.0,662.0 512.4,662.7 514.9,667.2 517.3,668.2 519.8,664.3 522.2,667.9 524.6,666.6 527.1,671.1 529.5,669.3 531.9,670.2 534.4,672.7 536.8,676.1 539.3,678.9 541.7,683.0 544.2,680.3 546.6,683.1 549.1,684.3 551.6,683.6 554.0,682.6 556.5,679.3 559.0,682.4 561.4,679.3 563.9,678.0 566.3,678.1 568.8,676.7 571.3,678.8 573.7,684.7 576.2,679.3 578.7,678.4 581.1,678.6 583.6,678.0 585.9,677.2 588.2,681.0 590.6,679.4 592.9,684.5 595.2,681.3 597.5,687.9 599.9,682.0 602.2,684.5 604.5,688.0 606.9,688.5 609.3,686.8 611.7,689.6 614.0,691.9 616.4,692.8 618.8,691.4 621.2,694.0 623.6,696.8 626.0,703.0 628.4,696.3 630.8,697.0 633.1,697.3 635.5,693.0 637.9,697.9 640.3,697.6 642.7,700.9 645.1,701.8 647.5,698.7 649.8,701.3 652.2,698.6 654.6,701.4 657.0,699.0 659.4,699.2 661.7,693.4 664.0,698.5 666.4,696.0 668.8,694.0 671.1,690.5 673.5,698.3 675.8,690.4 678.1,694.3 680.5,690.7 682.9,689.5 685.2,694.0 687.5,696.0 689.9,693.3 692.2,687.7 694.6,690.1 697.0,688.4 699.3,688.9 701.6,682.4 704.0,683.0 706.3,674.9 708.7,673.3 711.0,664.5 713.3,658.9 715.7,661.2 718.0,653.3 720.3,651.0 722.7,648.3 725.0,644.0 727.3,647.3 729.7,643.7 732.0,642.7 734.3,648.0 736.7,647.3 739.0,645.0 741.3,648.9 743.7,647.0 746.0,654.4 748.3,651.7 750.7,648.7 753.0,653.2 755.3,655.0 757.7,657.4 760.0,660.3 762.3,658.2 764.7,660.9 767.0,662.0 769.5,658.2 771.9,661.0 774.4,657.1 776.8,664.8 779.3,662.4 781.7,665.1 784.2,663.9 786.6,663.5 789.1,665.8 791.5,662.4 794.0,665.9 796.4,659.2 798.9,662.3 801.3,657.8 803.8,661.8 806.2,659.5 808.7,657.0 811.1,654.7 813.5,654.6 815.9,655.6 818.3,656.0 820.8,653.2 823.2,655.2 825.6,651.6 828.0,649.8 830.4,656.9 832.8,655.4 835.2,646.8 837.6,651.9 840.1,650.7 842.5,646.8 844.9,643.2 847.3,648.7 849.7,648.3 852.1,645.7 854.5,647.0 856.9,641.8 859.4,639.6 861.8,646.8 864.2,649.6 866.6,642.2 869.0,646.5 871.4,644.5 873.9,649.8 876.3,643.9 878.8,648.9 881.2,653.5 883.6,650.2 886.1,649.8 888.5,651.9 890.9,657.1 893.4,655.9 895.8,651.8 898.2,653.7 900.7,649.9 903.1,650.9 905.6,653.2 908.0,657.0 910.5,658.6 912.9,659.7 915.4,657.6 917.8,667.2 920.3,667.1 922.8,666.4 925.2,669.7 927.7,670.5 930.2,675.7 932.6,672.2 935.1,674.5 937.5,675.3 940.0,675.5 942.4,677.2 944.8,674.1 947.2,677.8 949.5,676.0 951.9,678.6 954.3,676.6 956.7,682.5 959.1,680.8 961.5,681.1 963.8,685.3 966.2,684.7 968.6,683.8 971.0,683.0 973.4,684.8 975.8,680.0 978.2,683.6 980.6,684.0 983.0,681.7 985.5,682.9 987.9,686.3 990.3,680.4 992.7,682.4 995.1,678.8 997.5,677.7 999.9,671.0 1002.3,678.3 1004.7,676.7 1007.1,687.0 1009.5,683.7 1012.0,685.8 1014.4,681.9 1016.8,683.8 1019.2,679.9 1021.6,682.7 1024.0,683.0 1026.3,681.8 1028.7,684.9 1031.0,681.1 1033.4,676.9 1035.8,677.7 1038.1,676.2 1040.5,677.6 1042.8,676.2 1045.2,670.9 1047.5,662.0 1049.8,668.6 1052.2,668.3 1054.5,661.7 1056.9,660.6 1059.2,657.8 1061.6,653.3 1064.0,654.2 1066.3,655.4 1068.7,652.0 1071.0,649.0 1073.3,647.3 1075.7,649.6 1078.0,646.5 1080.3,647.7 1082.7,651.5 1085.0,656.7 1087.3,654.1 1089.7,656.1 1092.0,657.2 1094.3,656.8 1096.7,654.9 1099.0,659.9 1101.3,661.2 1103.7,659.9 1106.0,660.6 1108.3,664.5 1110.7,661.2 1113.0,665.0 1115.3,667.7 1117.7,665.1 1120.0,664.7 1122.4,666.3 1124.8,672.1 1127.1,677.1 1129.5,678.9 1131.8,677.4 1134.2,678.0 1136.5,681.5 1138.8,687.6 1141.2,694.0 1143.5,689.9 1145.9,693.9 1148.2,700.8 1150.6,699.4 1153.0,701.7 1155.3,703.8 1157.7,703.2 1160.0,707.0 1162.3,707.1 1164.7,712.3 1167.0,708.1 1169.3,707.9 1171.7,702.6 1174.0,705.7 1176.3,706.6 1178.7,708.2 1181.0,704.9 1183.3,708.3 1185.7,714.5 1188.0,708.5 1190.3,703.2 1192.7,699.8 1195.0,697.6 1197.3,697.0 1199.7,693.8 1202.0,696.5 1204.4,696.8 1206.9,698.4 1209.3,693.9 1211.8,691.6 1214.2,693.4 1216.6,692.1 1219.1,689.6 1221.5,686.6 1224.0,688.8 1226.4,689.9 1228.8,682.4 1231.3,683.0 1233.7,680.5 1236.2,681.4 1238.6,678.0 1241.0,682.1 1243.3,681.1 1245.7,678.5 1248.0,683.2 1250.4,689.8 1252.7,688.4 1255.1,690.8 1257.4,695.0 1259.8,694.4 1262.2,696.2 1264.5,697.6 1266.9,696.9 1269.2,701.4 1271.6,695.8 1273.9,698.6 1276.3,698.0 1278.6,693.9 1281.0,698.4 1283.3,697.2 1285.7,696.5 1288.1,694.4 1290.5,696.6 1292.8,699.1 1295.2,699.3 1297.6,701.0 1300.0,701.7 1302.3,702.4 1304.7,701.3 1307.1,697.6 1309.5,701.3 1311.8,706.8 1314.2,705.8 1316.6,709.2 1319.0,709.1 1321.4,708.9 1323.7,710.4 1326.1,707.8 1328.5,707.9 1330.9,712.0 1333.2,707.3 1335.6,706.4 1338.0,707.0 1340.4,705.0 1342.9,700.4 1345.3,704.5 1347.7,706.6 1350.1,705.9 1352.6,707.7 1355.0,702.4 1357.4,702.1 1359.9,704.6 1362.3,703.0 1364.7,698.5 1367.1,697.9 1369.6,695.3 1372.0,695.1 1374.4,692.7 1376.9,687.0 1379.3,682.6 1381.7,683.2 1384.1,681.9 1386.6,678.2 1389.0,677.8 1391.4,673.2 1393.9,675.2 1396.3,672.9 1398.7,673.1 1401.1,670.4 1403.6,667.0 1406.0,667.6 1408.4,665.5 1410.9,660.1 1413.3,665.3 1415.7,656.1 1418.1,662.3 1420.6,656.6 1423.0,653.5 1425.4,654.3 1427.9,657.5 1430.3,649.1 1432.7,653.8 1435.1,649.1 1437.6,652.6 1440.0,650.9 1442.4,650.1 1444.9,652.4 1447.3,652.7 1449.7,651.6 1452.1,648.5 1454.6,652.0 1457.0,650.5 1459.4,648.4 1461.9,647.2 1464.3,653.4 1466.7,650.2 1469.1,651.6 1471.6,650.6 1474.0,646.7 1476.3,646.6 1478.7,651.2 1481.0,652.0 1483.3,650.6 1485.7,653.0 1488.0,656.7 1490.3,656.9 1492.7,656.0 1495.0,665.0 1497.4,663.2 1499.8,659.5 1502.2,660.4 1504.7,657.0 1507.1,648.1 1509.5,646.6 1511.9,647.7 1514.3,642.0 1516.8,636.7 1519.2,635.0 1521.6,633.1 1524.0,628.0 1526.6,627.6 1529.2,635.5 1531.9,630.8 1534.5,633.6" fill="none" stroke="#cfc39a" stroke-width="2.2" stroke-linejoin="round"/><polygon points="152,668.2 152.0,573.0 154.4,570.7 156.9,571.9 159.3,574.1 161.8,573.0 164.2,573.7 166.7,572.9 169.1,569.5 171.6,569.6 174.0,576.7 176.4,576.7 178.9,573.9 181.3,579.2 183.8,578.1 186.2,580.1 188.7,578.2 191.1,577.7 193.6,577.9 196.0,581.0 198.3,581.2 200.7,584.4 203.1,582.8 205.4,581.7 207.8,580.2 210.1,584.8 212.4,583.1 214.8,585.9 217.2,586.0 219.5,582.7 221.8,588.6 224.2,586.2 226.6,589.3 228.9,591.2 231.2,591.2 233.6,590.0 235.9,593.7 238.3,597.3 240.7,599.8 243.0,599.0 245.5,601.1 247.9,594.7 250.4,598.2 252.9,598.8 255.3,599.7 257.8,600.0 260.3,601.8 262.7,603.5 265.2,605.8 267.7,598.6 270.1,603.7 272.6,604.5 275.1,603.4 277.5,609.6 280.0,607.0 282.4,607.6 284.8,614.3 287.3,614.4 289.7,614.5 292.1,609.0 294.5,614.9 297.0,615.2 299.4,622.0 301.8,617.9 304.2,616.3 306.7,615.8 309.1,619.9 311.5,626.0 313.9,623.6 316.3,624.5 318.8,624.8 321.2,631.0 323.6,632.4 326.0,637.2 328.5,637.6 330.9,640.2 333.3,641.1 335.7,641.2 338.2,637.5 340.6,643.0 343.0,641.0 345.3,640.7 347.7,638.7 350.0,635.5 352.3,640.1 354.7,638.8 357.0,630.1 359.3,630.7 361.7,633.1 364.0,630.4 366.3,631.6 368.7,626.2 371.0,630.1 373.3,626.4 375.7,624.2 378.0,625.8 380.3,625.8 382.7,621.8 385.0,617.7 387.4,618.8 389.8,621.6 392.2,621.1 394.5,626.1 396.9,626.3 399.3,625.7 401.7,630.5 404.1,629.9 406.5,635.3 408.8,634.5 411.2,638.6 413.6,640.0 416.0,641.0 418.3,640.0 420.7,637.0 423.0,635.0 425.3,638.5 427.7,638.1 430.0,641.5 432.3,634.7 434.7,635.9 437.0,635.6 439.3,633.8 441.7,635.7 444.0,630.2 446.3,624.6 448.7,628.4 451.0,625.3 453.3,629.9 455.7,629.2 458.0,628.0 460.3,628.8 462.7,624.4 465.0,623.6 467.3,622.4 469.7,620.3 472.0,625.7 474.3,619.8 476.7,624.9 479.0,620.0 481.4,617.2 483.8,622.0 486.2,626.4 488.5,624.5 490.9,624.9 493.3,626.8 495.7,625.1 498.1,625.0 500.5,625.5 502.8,631.6 505.2,631.4 507.6,634.8 510.0,636.0 512.4,634.5 514.7,625.9 517.1,623.4 519.5,618.1 521.8,618.2 524.2,618.0 526.5,612.4 528.9,610.4 531.3,605.5 533.6,598.9 536.0,597.0 538.4,594.7 540.8,593.9 543.3,592.4 545.7,597.2 548.1,596.2 550.5,601.5 552.9,598.9 555.3,605.5 557.8,603.8 560.2,609.5 562.6,610.0 565.0,611.7 567.4,616.3 569.8,616.2 572.3,615.9 574.7,617.3 577.1,624.7 579.5,623.0 581.9,623.8 584.3,622.4 586.8,629.9 589.2,629.7 591.6,636.0 594.0,636.0 596.4,630.7 598.9,630.4 601.3,626.0 603.7,623.5 606.1,616.2 608.6,618.8 611.0,614.8 613.4,609.9 615.9,605.7 618.3,607.3 620.7,600.8 623.1,597.2 625.6,595.3 628.0,594.0 630.3,593.2 632.7,598.1 635.0,598.2 637.4,597.6 639.7,603.9 642.1,603.7 644.4,606.1 646.8,605.9 649.1,606.6 651.5,609.2 653.8,609.1 656.2,610.2 658.5,609.8 660.9,610.5 663.2,618.3 665.6,617.8 667.9,620.4 670.3,628.5 672.6,628.0 675.1,628.3 677.5,621.1 680.0,622.2 682.5,620.0 684.9,625.7 687.4,620.3 689.9,619.3 692.3,615.6 694.8,617.7 697.2,611.7 699.7,610.8 702.2,610.6 704.6,609.2 707.1,604.2 709.6,602.3 712.0,598.5 714.5,597.0 716.9,599.1 719.3,598.6 721.7,599.6 724.1,599.7 726.5,602.6 729.0,601.6 731.4,604.1 733.8,604.5 736.2,602.3 738.6,608.7 741.0,607.0 743.4,614.0 745.7,615.4 748.1,622.1 750.5,625.6 752.8,623.9 755.2,628.9 757.5,633.1 759.9,638.0 762.3,637.3 764.6,642.6 767.0,646.5 769.5,645.9 771.9,642.4 774.4,647.3 776.8,650.0 779.3,651.8 781.7,652.4 784.2,655.4 786.6,653.2 789.1,647.0 791.5,655.4 794.0,650.4 796.4,649.6 798.9,651.9 801.3,654.0 803.8,655.2 806.2,651.3 808.7,651.7 811.1,651.8 813.5,655.0 815.9,659.8 818.3,655.9 820.7,655.3 823.0,661.9 825.4,665.7 827.8,661.2 830.2,660.6 832.6,662.4 835.0,662.0 837.4,667.1 839.9,667.0 842.3,672.7 844.7,674.7 847.2,673.5 849.6,678.1 852.0,683.1 854.5,681.4 856.9,685.4 859.3,680.5 861.8,686.9 864.2,691.2 866.6,691.4 869.1,693.3 871.5,693.6 873.9,696.6 876.3,691.3 878.6,687.2 881.0,686.0 883.4,688.5 885.8,691.3 888.2,687.7 890.6,691.8 892.9,693.6 895.3,691.9 897.7,688.0 900.2,688.7 902.6,693.2 905.1,695.9 907.6,700.1 910.0,695.2 912.5,696.8 915.0,694.1 917.4,699.3 919.9,694.5 922.3,693.4 924.8,693.5 927.3,694.6 929.7,691.9 932.2,698.8 934.7,693.9 937.1,692.3 939.6,688.0 942.0,690.5 944.4,697.2 946.8,701.9 949.3,696.8 951.7,700.6 954.1,704.2 956.5,703.1 958.9,706.5 961.3,707.7 963.8,708.3 966.2,713.3 968.6,709.0 971.0,714.8 973.5,714.7 975.9,716.3 978.4,717.0 980.8,716.8 983.3,711.8 985.8,717.8 988.2,714.9 990.7,715.2 993.2,713.0 995.6,716.1 998.1,707.7 1000.5,712.2 1003.0,709.5 1005.4,707.0 1007.8,710.3 1010.2,711.0 1012.6,714.2 1015.0,710.2 1017.4,714.2 1019.8,712.0 1022.2,714.2 1024.6,710.4 1027.0,711.4 1029.4,711.6 1031.8,713.0 1034.2,713.6 1036.6,714.1 1039.0,713.0 1041.4,712.4 1043.8,710.1 1046.2,710.2 1048.6,710.2 1051.0,714.6 1053.4,713.3 1055.8,714.4 1058.2,712.0 1060.6,712.7 1063.0,714.8 1065.3,714.4 1067.7,707.9 1070.0,704.1 1072.4,700.7 1074.7,700.3 1077.1,700.0 1079.4,695.9 1081.8,694.2 1084.1,694.5 1086.5,696.5 1088.8,696.3 1091.2,691.9 1093.5,691.5 1095.9,687.9 1098.2,682.4 1100.6,685.4 1102.9,681.5 1105.3,680.7 1107.6,678.0 1110.1,680.8 1112.5,682.6 1115.0,683.9 1117.5,689.9 1119.9,691.3 1122.4,695.1 1124.9,695.6 1127.3,695.9 1129.8,702.6 1132.2,699.0 1134.7,699.9 1137.2,702.5 1139.6,704.6 1142.1,708.1 1144.6,709.0 1147.0,710.5 1149.5,712.0 1151.9,706.9 1154.3,710.4 1156.7,701.7 1159.0,709.0 1161.4,698.2 1163.8,702.0 1166.2,694.3 1168.6,692.5 1171.0,690.7 1173.4,688.9 1175.8,681.7 1178.1,681.6 1180.5,683.1 1182.9,677.7 1185.3,672.3 1187.7,675.7 1190.1,675.3 1192.5,670.8 1194.8,670.7 1197.2,664.2 1199.6,666.0 1202.0,665.0 1204.4,669.8 1206.8,670.2 1209.2,668.5 1211.5,674.7 1213.9,677.1 1216.3,683.3 1218.7,683.9 1221.1,684.9 1223.5,691.1 1225.8,689.8 1228.2,697.1 1230.6,697.2 1233.0,696.5 1235.5,696.5 1237.9,692.9 1240.4,692.5 1242.9,682.6 1245.3,682.9 1247.8,679.6 1250.3,679.0 1252.7,676.7 1255.2,670.5 1257.7,672.4 1260.1,669.1 1262.6,660.0 1265.1,657.2 1267.5,655.2 1270.0,652.0 1272.4,653.1 1274.9,655.1 1277.3,652.8 1279.8,654.5 1282.2,652.0 1284.7,651.8 1287.1,651.9 1289.6,651.4 1292.0,656.7 1294.5,653.0 1296.9,652.1 1299.4,658.7 1301.8,658.7 1304.3,661.5 1306.7,657.0 1309.1,659.2 1311.5,660.2 1314.0,664.7 1316.4,667.7 1318.8,668.2 1321.2,672.4 1323.6,670.5 1326.1,673.0 1328.5,669.3 1330.9,674.7 1333.3,678.9 1335.7,674.1 1338.2,678.9 1340.6,682.7 1343.0,683.0 1345.3,683.4 1347.7,688.0 1350.0,686.3 1352.3,688.6 1354.7,690.4 1357.0,689.0 1359.3,691.7 1361.7,690.8 1364.0,694.9 1366.3,696.5 1368.7,692.7 1371.0,697.2 1373.3,698.7 1375.7,698.9 1378.0,706.2 1380.3,701.6 1382.7,702.3 1385.0,704.0 1387.3,705.0 1389.7,704.7 1392.0,707.6 1394.3,709.5 1396.7,707.7 1399.0,705.6 1401.3,710.9 1403.7,707.9 1406.0,713.6 1408.3,711.0 1410.7,710.7 1413.0,709.0 1415.3,719.0 1417.7,711.4 1420.0,709.7 1422.3,712.4 1424.7,713.4 1427.0,715.0 1429.3,718.7 1431.7,719.8 1434.0,720.7 1436.4,726.3 1438.8,728.7 1441.1,725.5 1443.5,727.6 1445.8,729.2 1448.2,729.9 1450.5,733.6 1452.8,733.4 1455.2,739.6 1457.5,739.8 1459.9,738.1 1462.2,741.7 1464.6,737.5 1467.0,741.4 1469.3,744.8 1471.7,745.5 1474.0,749.0 1476.5,744.5 1478.9,739.3 1481.4,741.8 1483.8,744.5 1486.3,741.1 1488.8,737.1 1491.2,733.0 1493.7,732.9 1496.2,728.1 1498.6,724.9 1501.1,725.1 1503.5,719.1 1506.0,720.0 1508.4,726.3 1510.8,720.5 1513.1,717.9 1515.5,714.8 1517.9,714.1 1520.2,715.1 1522.6,713.5 1525.0,721.3 1527.4,715.4 1529.8,714.6 1532.1,714.5 1534.5,712.0 1534.5,668.2" fill="#7fa3bb" fill-opacity="0.22"/><polyline points="152.0,573.0 154.4,570.7 156.9,571.9 159.3,574.1 161.8,573.0 164.2,573.7 166.7,572.9 169.1,569.5 171.6,569.6 174.0,576.7 176.4,576.7 178.9,573.9 181.3,579.2 183.8,578.1 186.2,580.1 188.7,578.2 191.1,577.7 193.6,577.9 196.0,581.0 198.3,581.2 200.7,584.4 203.1,582.8 205.4,581.7 207.8,580.2 210.1,584.8 212.4,583.1 214.8,585.9 217.2,586.0 219.5,582.7 221.8,588.6 224.2,586.2 226.6,589.3 228.9,591.2 231.2,591.2 233.6,590.0 235.9,593.7 238.3,597.3 240.7,599.8 243.0,599.0 245.5,601.1 247.9,594.7 250.4,598.2 252.9,598.8 255.3,599.7 257.8,600.0 260.3,601.8 262.7,603.5 265.2,605.8 267.7,598.6 270.1,603.7 272.6,604.5 275.1,603.4 277.5,609.6 280.0,607.0 282.4,607.6 284.8,614.3 287.3,614.4 289.7,614.5 292.1,609.0 294.5,614.9 297.0,615.2 299.4,622.0 301.8,617.9 304.2,616.3 306.7,615.8 309.1,619.9 311.5,626.0 313.9,623.6 316.3,624.5 318.8,624.8 321.2,631.0 323.6,632.4 326.0,637.2 328.5,637.6 330.9,640.2 333.3,641.1 335.7,641.2 338.2,637.5 340.6,643.0 343.0,641.0 345.3,640.7 347.7,638.7 350.0,635.5 352.3,640.1 354.7,638.8 357.0,630.1 359.3,630.7 361.7,633.1 364.0,630.4 366.3,631.6 368.7,626.2 371.0,630.1 373.3,626.4 375.7,624.2 378.0,625.8 380.3,625.8 382.7,621.8 385.0,617.7 387.4,618.8 389.8,621.6 392.2,621.1 394.5,626.1 396.9,626.3 399.3,625.7 401.7,630.5 404.1,629.9 406.5,635.3 408.8,634.5 411.2,638.6 413.6,640.0 416.0,641.0 418.3,640.0 420.7,637.0 423.0,635.0 425.3,638.5 427.7,638.1 430.0,641.5 432.3,634.7 434.7,635.9 437.0,635.6 439.3,633.8 441.7,635.7 444.0,630.2 446.3,624.6 448.7,628.4 451.0,625.3 453.3,629.9 455.7,629.2 458.0,628.0 460.3,628.8 462.7,624.4 465.0,623.6 467.3,622.4 469.7,620.3 472.0,625.7 474.3,619.8 476.7,624.9 479.0,620.0 481.4,617.2 483.8,622.0 486.2,626.4 488.5,624.5 490.9,624.9 493.3,626.8 495.7,625.1 498.1,625.0 500.5,625.5 502.8,631.6 505.2,631.4 507.6,634.8 510.0,636.0 512.4,634.5 514.7,625.9 517.1,623.4 519.5,618.1 521.8,618.2 524.2,618.0 526.5,612.4 528.9,610.4 531.3,605.5 533.6,598.9 536.0,597.0 538.4,594.7 540.8,593.9 543.3,592.4 545.7,597.2 548.1,596.2 550.5,601.5 552.9,598.9 555.3,605.5 557.8,603.8 560.2,609.5 562.6,610.0 565.0,611.7 567.4,616.3 569.8,616.2 572.3,615.9 574.7,617.3 577.1,624.7 579.5,623.0 581.9,623.8 584.3,622.4 586.8,629.9 589.2,629.7 591.6,636.0 594.0,636.0 596.4,630.7 598.9,630.4 601.3,626.0 603.7,623.5 606.1,616.2 608.6,618.8 611.0,614.8 613.4,609.9 615.9,605.7 618.3,607.3 620.7,600.8 623.1,597.2 625.6,595.3 628.0,594.0 630.3,593.2 632.7,598.1 635.0,598.2 637.4,597.6 639.7,603.9 642.1,603.7 644.4,606.1 646.8,605.9 649.1,606.6 651.5,609.2 653.8,609.1 656.2,610.2 658.5,609.8 660.9,610.5 663.2,618.3 665.6,617.8 667.9,620.4 670.3,628.5 672.6,628.0 675.1,628.3 677.5,621.1 680.0,622.2 682.5,620.0 684.9,625.7 687.4,620.3 689.9,619.3 692.3,615.6 694.8,617.7 697.2,611.7 699.7,610.8 702.2,610.6 704.6,609.2 707.1,604.2 709.6,602.3 712.0,598.5 714.5,597.0 716.9,599.1 719.3,598.6 721.7,599.6 724.1,599.7 726.5,602.6 729.0,601.6 731.4,604.1 733.8,604.5 736.2,602.3 738.6,608.7 741.0,607.0 743.4,614.0 745.7,615.4 748.1,622.1 750.5,625.6 752.8,623.9 755.2,628.9 757.5,633.1 759.9,638.0 762.3,637.3 764.6,642.6 767.0,646.5 769.5,645.9 771.9,642.4 774.4,647.3 776.8,650.0 779.3,651.8 781.7,652.4 784.2,655.4 786.6,653.2 789.1,647.0 791.5,655.4 794.0,650.4 796.4,649.6 798.9,651.9 801.3,654.0 803.8,655.2 806.2,651.3 808.7,651.7 811.1,651.8 813.5,655.0 815.9,659.8 818.3,655.9 820.7,655.3 823.0,661.9 825.4,665.7 827.8,661.2 830.2,660.6 832.6,662.4 835.0,662.0 837.4,667.1 839.9,667.0 842.3,672.7 844.7,674.7 847.2,673.5 849.6,678.1 852.0,683.1 854.5,681.4 856.9,685.4 859.3,680.5 861.8,686.9 864.2,691.2 866.6,691.4 869.1,693.3 871.5,693.6 873.9,696.6 876.3,691.3 878.6,687.2 881.0,686.0 883.4,688.5 885.8,691.3 888.2,687.7 890.6,691.8 892.9,693.6 895.3,691.9 897.7,688.0 900.2,688.7 902.6,693.2 905.1,695.9 907.6,700.1 910.0,695.2 912.5,696.8 915.0,694.1 917.4,699.3 919.9,694.5 922.3,693.4 924.8,693.5 927.3,694.6 929.7,691.9 932.2,698.8 934.7,693.9 937.1,692.3 939.6,688.0 942.0,690.5 944.4,697.2 946.8,701.9 949.3,696.8 951.7,700.6 954.1,704.2 956.5,703.1 958.9,706.5 961.3,707.7 963.8,708.3 966.2,713.3 968.6,709.0 971.0,714.8 973.5,714.7 975.9,716.3 978.4,717.0 980.8,716.8 983.3,711.8 985.8,717.8 988.2,714.9 990.7,715.2 993.2,713.0 995.6,716.1 998.1,707.7 1000.5,712.2 1003.0,709.5 1005.4,707.0 1007.8,710.3 1010.2,711.0 1012.6,714.2 1015.0,710.2 1017.4,714.2 1019.8,712.0 1022.2,714.2 1024.6,710.4 1027.0,711.4 1029.4,711.6 1031.8,713.0 1034.2,713.6 1036.6,714.1 1039.0,713.0 1041.4,712.4 1043.8,710.1 1046.2,710.2 1048.6,710.2 1051.0,714.6 1053.4,713.3 1055.8,714.4 1058.2,712.0 1060.6,712.7 1063.0,714.8 1065.3,714.4 1067.7,707.9 1070.0,704.1 1072.4,700.7 1074.7,700.3 1077.1,700.0 1079.4,695.9 1081.8,694.2 1084.1,694.5 1086.5,696.5 1088.8,696.3 1091.2,691.9 1093.5,691.5 1095.9,687.9 1098.2,682.4 1100.6,685.4 1102.9,681.5 1105.3,680.7 1107.6,678.0 1110.1,680.8 1112.5,682.6 1115.0,683.9 1117.5,689.9 1119.9,691.3 1122.4,695.1 1124.9,695.6 1127.3,695.9 1129.8,702.6 1132.2,699.0 1134.7,699.9 1137.2,702.5 1139.6,704.6 1142.1,708.1 1144.6,709.0 1147.0,710.5 1149.5,712.0 1151.9,706.9 1154.3,710.4 1156.7,701.7 1159.0,709.0 1161.4,698.2 1163.8,702.0 1166.2,694.3 1168.6,692.5 1171.0,690.7 1173.4,688.9 1175.8,681.7 1178.1,681.6 1180.5,683.1 1182.9,677.7 1185.3,672.3 1187.7,675.7 1190.1,675.3 1192.5,670.8 1194.8,670.7 1197.2,664.2 1199.6,666.0 1202.0,665.0 1204.4,669.8 1206.8,670.2 1209.2,668.5 1211.5,674.7 1213.9,677.1 1216.3,683.3 1218.7,683.9 1221.1,684.9 1223.5,691.1 1225.8,689.8 1228.2,697.1 1230.6,697.2 1233.0,696.5 1235.5,696.5 1237.9,692.9 1240.4,692.5 1242.9,682.6 1245.3,682.9 1247.8,679.6 1250.3,679.0 1252.7,676.7 1255.2,670.5 1257.7,672.4 1260.1,669.1 1262.6,660.0 1265.1,657.2 1267.5,655.2 1270.0,652.0 1272.4,653.1 1274.9,655.1 1277.3,652.8 1279.8,654.5 1282.2,652.0 1284.7,651.8 1287.1,651.9 1289.6,651.4 1292.0,656.7 1294.5,653.0 1296.9,652.1 1299.4,658.7 1301.8,658.7 1304.3,661.5 1306.7,657.0 1309.1,659.2 1311.5,660.2 1314.0,664.7 1316.4,667.7 1318.8,668.2 1321.2,672.4 1323.6,670.5 1326.1,673.0 1328.5,669.3 1330.9,674.7 1333.3,678.9 1335.7,674.1 1338.2,678.9 1340.6,682.7 1343.0,683.0 1345.3,683.4 1347.7,688.0 1350.0,686.3 1352.3,688.6 1354.7,690.4 1357.0,689.0 1359.3,691.7 1361.7,690.8 1364.0,694.9 1366.3,696.5 1368.7,692.7 1371.0,697.2 1373.3,698.7 1375.7,698.9 1378.0,706.2 1380.3,701.6 1382.7,702.3 1385.0,704.0 1387.3,705.0 1389.7,704.7 1392.0,707.6 1394.3,709.5 1396.7,707.7 1399.0,705.6 1401.3,710.9 1403.7,707.9 1406.0,713.6 1408.3,711.0 1410.7,710.7 1413.0,709.0 1415.3,719.0 1417.7,711.4 1420.0,709.7 1422.3,712.4 1424.7,713.4 1427.0,715.0 1429.3,718.7 1431.7,719.8 1434.0,720.7 1436.4,726.3 1438.8,728.7 1441.1,725.5 1443.5,727.6 1445.8,729.2 1448.2,729.9 1450.5,733.6 1452.8,733.4 1455.2,739.6 1457.5,739.8 1459.9,738.1 1462.2,741.7 1464.6,737.5 1467.0,741.4 1469.3,744.8 1471.7,745.5 1474.0,749.0 1476.5,744.5 1478.9,739.3 1481.4,741.8 1483.8,744.5 1486.3,741.1 1488.8,737.1 1491.2,733.0 1493.7,732.9 1496.2,728.1 1498.6,724.9 1501.1,725.1 1503.5,719.1 1506.0,720.0 1508.4,726.3 1510.8,720.5 1513.1,717.9 1515.5,714.8 1517.9,714.1 1520.2,715.1 1522.6,713.5 1525.0,721.3 1527.4,715.4 1529.8,714.6 1532.1,714.5 1534.5,712.0" fill="none" stroke="#7fa3bb" stroke-width="2.2" stroke-linejoin="round"/></svg>
<div class="b" style="left:1552px;top:436.1px;width:330px;height:2.0px;background:rgba(204,204,220,0.12);"></div>
<div class="b" style="left:1552px;top:482.9px;width:330px;height:2.0px;background:rgba(204,204,220,0.12);"></div>
<div class="b" style="left:1552px;top:530.5px;width:330px;height:2.0px;background:rgba(204,204,220,0.12);"></div>
<div class="b" style="left:1552px;top:578.9px;width:330px;height:2.0px;background:rgba(204,204,220,0.12);"></div>
<div class="b" style="left:1552px;top:627.2px;width:330px;height:2.0px;background:rgba(204,204,220,0.12);"></div>
<div class="b" style="left:1568px;top:456.5px;width:28px;height:8.0px;background:#326ecd;border-radius:4px;"></div>
<div class="b" style="left:1568px;top:504.29999999999995px;width:28px;height:8.0px;background:#d0373c;border-radius:4px;"></div>
<div class="b" style="left:1568px;top:552.1px;width:28px;height:8.0px;background:#c9c09b;border-radius:4px;"></div>
<div class="b" style="left:1568px;top:599.9px;width:28px;height:8.0px;background:#789bb0;border-radius:4px;"></div>
<svg class="s" style="left:0px;top:0px;" width="3008" height="1382" viewBox="0 0 3008 1382"><g stroke="#55575d" stroke-width="2.4" stroke-linecap="round"><line x1="1878.8" y1="879.7" x2="1896" y2="862.7"/><line x1="1887.8" y1="879.7" x2="1896" y2="872"/></g></svg>
<svg class="s" style="left:0px;top:0px;" width="3008" height="1382" viewBox="0 0 3008 1382"><g stroke="rgba(204,204,220,0.10)" stroke-width="1.6"><line x1="151" y1="1046.2" x2="948.5" y2="1046.2"/><line x1="151" y1="1110.5" x2="948.5" y2="1110.5"/><line x1="151" y1="1174.8" x2="948.5" y2="1174.8"/><line x1="151" y1="1239.1" x2="948.5" y2="1239.1"/><line x1="151" y1="1303.4" x2="948.5" y2="1303.4"/><line x1="151" y1="1367.7" x2="948.5" y2="1367.7"/><line x1="158.4" y1="1015" x2="158.4" y2="1382"/><line x1="239.1" y1="1015" x2="239.1" y2="1382"/><line x1="319.7" y1="1015" x2="319.7" y2="1382"/><line x1="400.4" y1="1015" x2="400.4" y2="1382"/><line x1="481.1" y1="1015" x2="481.1" y2="1382"/><line x1="561.8" y1="1015" x2="561.8" y2="1382"/><line x1="642.4" y1="1015" x2="642.4" y2="1382"/><line x1="723.1" y1="1015" x2="723.1" y2="1382"/><line x1="803.8" y1="1015" x2="803.8" y2="1382"/><line x1="884.4" y1="1015" x2="884.4" y2="1382"/></g></svg>
<svg class="s" style="left:0px;top:0px;" width="3008" height="1382" viewBox="0 0 3008 1382"><rect x="786.80" y="1352.9" width="7.10" height="14.1" fill="#4a7fd6" stroke="#6b9ff2" stroke-width="1.4"/><rect x="794.90" y="1307.5" width="7.10" height="59.5" fill="#4a7fd6" stroke="#6b9ff2" stroke-width="1.4"/><rect x="803.00" y="1300.9" width="7.10" height="66.1" fill="#4a7fd6" stroke="#6b9ff2" stroke-width="1.4"/><rect x="811.10" y="1310.5" width="7.10" height="56.5" fill="#4a7fd6" stroke="#6b9ff2" stroke-width="1.4"/><rect x="819.20" y="1249.8" width="7.10" height="117.2" fill="#4a7fd6" stroke="#6b9ff2" stroke-width="1.4"/><rect x="827.30" y="1317.3" width="7.10" height="49.7" fill="#4a7fd6" stroke="#6b9ff2" stroke-width="1.4"/><rect x="835.40" y="1333.0" width="7.10" height="34.0" fill="#4a7fd6" stroke="#6b9ff2" stroke-width="1.4"/><rect x="843.50" y="1226.6" width="7.10" height="140.4" fill="#4a7fd6" stroke="#6b9ff2" stroke-width="1.4"/><rect x="851.60" y="1182.1" width="7.10" height="184.9" fill="#4a7fd6" stroke="#6b9ff2" stroke-width="1.4"/><rect x="859.70" y="1169.3" width="7.10" height="197.7" fill="#4a7fd6" stroke="#6b9ff2" stroke-width="1.4"/><rect x="867.80" y="1108.4" width="7.10" height="258.6" fill="#4a7fd6" stroke="#6b9ff2" stroke-width="1.4"/><rect x="875.90" y="1236.5" width="7.10" height="130.5" fill="#4a7fd6" stroke="#6b9ff2" stroke-width="1.4"/><rect x="884.00" y="1179.1" width="7.10" height="187.9" fill="#4a7fd6" stroke="#6b9ff2" stroke-width="1.4"/><rect x="892.10" y="1262.3" width="7.10" height="104.7" fill="#4a7fd6" stroke="#6b9ff2" stroke-width="1.4"/><rect x="900.20" y="1214.2" width="7.10" height="152.8" fill="#4a7fd6" stroke="#6b9ff2" stroke-width="1.4"/><rect x="908.30" y="1047.4" width="7.10" height="319.6" fill="#4a7fd6" stroke="#6b9ff2" stroke-width="1.4"/><rect x="916.40" y="1265.9" width="7.10" height="101.1" fill="#4a7fd6" stroke="#6b9ff2" stroke-width="1.4"/><rect x="924.50" y="1352.9" width="7.10" height="14.1" fill="#4a7fd6" stroke="#6b9ff2" stroke-width="1.4"/><rect x="932.60" y="1298.0" width="7.10" height="69.0" fill="#4a7fd6" stroke="#6b9ff2" stroke-width="1.4"/><rect x="940.70" y="1343.1" width="7.10" height="23.9" fill="#4a7fd6" stroke="#6b9ff2" stroke-width="1.4"/></svg>
<div class="b" style="left:1000px;top:982px;width:898px;height:400px;background:linear-gradient(120deg,#43a047 0%,#5aab50 45%,#6cb85a 100%);"></div>
<svg class="s" style="left:0px;top:0px;" width="3008" height="1382" viewBox="0 0 3008 1382"><g fill="#f5f6f8" fill-rule="evenodd" transform="translate(1100,1120) scale(0.19429)"><path d="M510,68 L710,68 L710,778 L850,778 L850,915 L710,915 L710,1122 L555,1122 L555,915 L57,915 L57,780 Z M225,778 L555,778 L555,258 L545,258 Z"/><path d="M1190,68 L1378,68 L1378,1122 L1215,1122 L1215,212 L1205,212 L958,395 L958,235 Z"/><circle cx="1715" cy="1028" r="103"/></g><g fill="#f5f6f8" fill-rule="evenodd" transform="translate(1470,1120) scale(0.19429)"><path d="M100,340 A340,287 0 0 1 785,345 Q770,520 600,575 Q825,640 825,820 A370,305 0 0 1 78,845 L240,845 A210,175 0 0 0 660,830 A210,175 0 0 0 455,648 L340,648 L340,515 L455,515 A178,163 0 0 0 628,345 A178,163 0 0 0 455,188 A178,163 0 0 0 255,340 Z"/><path d="M1208,487 L1440,487 C1560,487 1643,560 1643,660 C1643,730 1600,775 1535,790 C1615,805 1668,870 1668,950 C1668,1055 1590,1122 1460,1122 L1208,1122 Z M1307,572 L1440,572 C1505,572 1545,610 1545,665 C1545,722 1505,760 1440,760 L1307,760 Z M1307,838 L1460,838 C1525,838 1568,880 1568,937 C1568,995 1525,1035 1460,1035 L1307,1035 Z"/></g></svg>
<div class="b" style="left:1922px;top:220px;width:12px;height:722px;background:#4b4c52;border-radius:6px;"></div>
<div class="b" style="left:1950px;top:214px;width:84px;height:1139px;background:#1b1c20;box-shadow:inset 0 0 0 2px #2c2e34;border-radius:12px;"></div>
<div class="b" style="left:1968px;top:232px;width:48px;height:48px;background:#3d71d9;border-radius:8px;"></div>
<svg class="s" style="left:1978px;top:242px;" width="28" height="28" viewBox="0 0 28 28"><path d="M14 2V26M2 14H26" stroke="#fff" stroke-width="3" stroke-linecap="round"/></svg>
<svg class="s" style="left:0px;top:0px;" width="3008" height="1382" viewBox="0 0 3008 1382"><g fill="none" stroke="#9d9ea8" stroke-width="2.7" stroke-linejoin="round"><path d="M1988.79,326.11 L1989.17,322.70 L1994.83,322.70 L1995.21,326.11 L1995.98,326.39 L1996.72,326.73 L1999.41,324.59 L2003.41,328.59 L2001.27,331.28 L2001.61,332.02 L2001.89,332.79 L2005.30,333.17 L2005.30,338.83 L2001.89,339.21 L2001.61,339.98 L2001.27,340.72 L2003.41,343.41 L1999.41,347.41 L1996.72,345.27 L1995.98,345.61 L1995.21,345.89 L1994.83,349.30 L1989.17,349.30 L1988.79,345.89 L1988.02,345.61 L1987.28,345.27 L1984.59,347.41 L1980.59,343.41 L1982.73,340.72 L1982.39,339.98 L1982.11,339.21 L1978.70,338.83 L1978.70,333.17 L1982.11,332.79 L1982.39,332.02 L1982.73,331.28 L1980.59,328.59 L1984.59,324.59 L1987.28,326.73 L1988.02,326.39Z"/><circle cx="1992" cy="336" r="4.6"/></g></svg>
<svg class="s" style="left:0px;top:0px;" width="3008" height="1382" viewBox="0 0 3008 1382"><g fill="none" stroke="#f46a24" stroke-width="3" stroke-linejoin="round" stroke-linecap="round"><path d="M1981 402.9H2003a2.2 2.2 0 0 1 2.2 2.2V429.3L1999.2 423.4H1981a2.2 2.2 0 0 1-2.2-2.2V405.1a2.2 2.2 0 0 1 2.2-2.2Z"/><line x1="1984.5" y1="410.3" x2="1999.8" y2="410.3"/><line x1="1984.5" y1="416.2" x2="1999.8" y2="416.2"/></g></svg>
<svg class="s" style="left:1975px;top:480px;" width="34" height="34" viewBox="0 0 34 34"><g fill="none" stroke="#9d9ea8" stroke-width="2.6" stroke-linecap="round" stroke-linejoin="round"><path d="M11.5 3C7.5 3 7 5.5 7 9.5S7 15.5 2 17C7 18.5 7 20.5 7 24.5S7.5 31 11.5 31"/><path d="M22.5 3C26.5 3 27 5.5 27 9.5S27 15.5 32 17C27 18.5 27 20.5 27 24.5S26.5 31 22.5 31"/></g></svg>
<svg class="s" style="left:0px;top:0px;" width="3008" height="1382" viewBox="0 0 3008 1382"><g fill="none" stroke="#9d9ea8" stroke-width="2.7" stroke-linecap="round" stroke-linejoin="round"><path d="M1985.5 572.6H1982.5a2.8 2.8 0 0 0-2.8 2.8V586.6a2.8 2.8 0 0 0 2.8 2.8H2001.5a2.8 2.8 0 0 0 2.8-2.8V575.4a2.8 2.8 0 0 0-2.8-2.8H1998.5"/><line x1="1992" y1="562.8" x2="1992" y2="582.2"/><polyline points="1986.6,576.9 1992,582.3 1997.4,576.9"/></g></svg>
<svg class="s" style="left:0px;top:0px;" width="3008" height="1382" viewBox="0 0 3008 1382"><g stroke="#9d9ea8" stroke-width="2.9" stroke-linecap="round"><line x1="1979" y1="648.3" x2="1979.3" y2="648.3"/><line x1="1985" y1="648.3" x2="2006.8" y2="648.3"/><line x1="1985.2" y1="655.8" x2="1985.5" y2="655.8"/><line x1="1991" y1="655.8" x2="2006.8" y2="655.8"/><line x1="1991" y1="663.4" x2="1991.3" y2="663.4"/><line x1="1997" y1="663.4" x2="2006.8" y2="663.4"/></g></svg>
<svg class="s" style="left:0px;top:0px;" width="3008" height="1382" viewBox="0 0 3008 1382"><g fill="none" stroke="#9d9ea8" stroke-width="2.6" stroke-linecap="round"><circle cx="1992.2" cy="744.1" r="13.5"/><line x1="1992.2" y1="744.3" x2="1992.2" y2="750"/></g><circle cx="1992.2" cy="738.9" r="1.8" fill="#9d9ea8"/></svg>
<svg class="s" style="left:1975px;top:1294px;" width="34" height="34" viewBox="0 0 34 34"><g fill="none" stroke="#9d9ea8" stroke-width="2.6"><rect x="3" y="2.5" width="28" height="29"/><line x1="13" y1="2.5" x2="13" y2="31.5"/></g></svg>
<div class="b" style="left:2066px;top:6px;width:4px;height:1376px;background:#2d3036;"></div>
<div class="b" style="left:2070px;top:6px;width:938px;height:1376px;background:#1b1c21;"></div>
<div class="b" style="left:2070px;top:86px;width:938px;height:2px;background:#2d3036;"></div>
<svg class="s" style="left:2080px;top:20px;" width="60" height="60" viewBox="0 0 60 60"><g fill="#a3a4b0"><path d="M19.8,9.600000000000001 Q21.816000000000003,14.784 27.0,16.8 Q21.816000000000003,18.816000000000003 19.8,24.0 Q17.784,18.816000000000003 12.600000000000001,16.8 Q17.784,14.784 19.8,9.600000000000001Z"/><path d="M34.3,18.0 Q38.08,27.72 47.8,31.5 Q38.08,35.28 34.3,45.0 Q30.519999999999996,35.28 20.799999999999997,31.5 Q30.519999999999996,27.72 34.3,18.0Z"/></g></svg>
<svg class="s" style="left:2644.3px;top:41.3px;" width="17.4" height="11.4" viewBox="0 0 17.4 11.4"><polyline points="3,3 8.70,8.40 14.40,3" fill="none" stroke="#9a9aa6" stroke-width="2.6" stroke-linecap="round" stroke-linejoin="round"/></svg>
<svg class="s" style="left:2810px;top:30px;" width="24" height="34" viewBox="0 0 24 34"><g fill="#ccccdc"><circle cx="12" cy="7.5" r="2.8"/><circle cx="12" cy="17" r="2.8"/><circle cx="12" cy="26.5" r="2.8"/></g></svg>
<svg class="s" style="left:0px;top:0px;" width="3008" height="1382" viewBox="0 0 3008 1382"><path d="M2878 37.8V56.3M2868.7 47H2887.3" stroke="#ccccdc" stroke-width="2.5" stroke-linecap="round"/></svg>
<div class="b" style="left:2926px;top:27px;width:2px;height:40px;background:#34363c;"></div>
<svg class="s" style="left:0px;top:0px;" width="3008" height="1382" viewBox="0 0 3008 1382"><path d="M2961 40.5L2975 54M2975 40.5L2961 54" stroke="#ccccdc" stroke-width="2.5" stroke-linecap="round"/></svg>
<svg class="s" style="left:2102px;top:120px;" width="48" height="48" viewBox="0 0 48 48"><defs><clipPath id="av"><circle cx="24" cy="24" r="24"/></clipPath></defs><g clip-path="url(#av)" shape-rendering="crispEdges"><rect width="48" height="48" fill="#783c06"/><g fill="#daa87d"><rect x="5" y="4.8" width="4.2" height="5.2"/><rect x="37.9" y="4.8" width="5.2" height="5.2"/><rect x="14.2" y="13.9" width="19.9" height="5.1"/><rect x="5" y="23.9" width="14.2" height="14.2"/><rect x="28.9" y="23.9" width="14.2" height="14.2"/><rect x="19.2" y="28.6" width="9.7" height="5.2"/><rect x="19.2" y="38.1" width="9.7" height="5"/></g></g></svg>
<div class="b" style="left:2174.5px;top:121px;width:736.5px;height:274.3px;background:#22252b;box-shadow:inset 0 0 0 2px #34373e;border-radius:10px;"></div>
<svg class="s" style="left:2160px;top:130px;" width="20" height="30" viewBox="0 0 20 30"><path d="M16 2L4 14.5L16 27" fill="#22252b" stroke="#34373e" stroke-width="2"/><rect x="16" y="0" width="4" height="30" fill="#22252b"/></svg>
<div class="b" style="left:2208.4px;top:146.6px;width:301.4000000000001px;height:43.20000000000002px;background:#2b2e35;box-shadow:inset 0 0 0 2px #3a3d44;border-radius:6px;"></div>
<svg class="s" style="left:0px;top:0px;" width="3008" height="1382" viewBox="0 0 3008 1382"><g fill="none" stroke="#ccccdc" stroke-width="1.3"><rect x="2219.8" y="157.6" width="20.4" height="20.8" rx="1.6"/><rect x="2223.7" y="161.7" width="5.4" height="5.4" rx="0.9"/><rect x="2231.7" y="161.7" width="5.4" height="5.4" rx="0.9"/><rect x="2223.7" y="169.7" width="5.4" height="5.4" rx="0.9"/><rect x="2231.7" y="169.7" width="5.4" height="5.4" rx="0.9"/></g></svg>
<svg class="s" style="left:2105.5px;top:432.5px;" width="18" height="14.5" viewBox="0 0 18 14.5"><polyline points="2,6.7250000000000005 7.32,12.5 16,2" fill="none" stroke="rgba(204,204,220,0.6)" stroke-width="2.3" stroke-linecap="round" stroke-linejoin="round"/></svg>
<svg class="s" style="left:2108.7px;top:583.7px;" width="15.6" height="10.6" viewBox="0 0 15.6 10.6"><polyline points="3,3 7.80,7.60 12.60,3" fill="none" stroke="rgba(204,204,220,0.6)" stroke-width="2.4" stroke-linecap="round" stroke-linejoin="round"/></svg>
<svg class="s" style="left:2109px;top:637px;" width="18" height="14" viewBox="0 0 18 14"><polyline points="2,6.5 7.32,12 16,2" fill="none" stroke="rgba(204,204,220,0.6)" stroke-width="2.3" stroke-linecap="round" stroke-linejoin="round"/></svg>
<svg class="s" style="left:2150px;top:630px;" width="24" height="24" viewBox="0 0 24 24"><g fill="none" stroke="rgba(204,204,220,0.6)" stroke-width="2" stroke-linecap="round"><circle cx="12" cy="12" r="9.5"/><path d="M9.2 9.5a2.9 2.9 0 1 1 4 2.6c-.8.4-1.2 1-1.2 1.9"/><line x1="12" y1="17" x2="12" y2="17.2"/></g></svg>
<svg class="s" style="left:2479.2px;top:638.7px;" width="16.6" height="10.6" viewBox="0 0 16.6 10.6"><polyline points="3,3 8.30,7.60 13.60,3" fill="none" stroke="rgba(204,204,220,0.6)" stroke-width="2.4" stroke-linecap="round" stroke-linejoin="round"/></svg>
<svg class="s" style="left:2109px;top:683px;" width="18" height="14" viewBox="0 0 18 14"><polyline points="2,6.5 7.32,12 16,2" fill="none" stroke="rgba(204,204,220,0.6)" stroke-width="2.3" stroke-linecap="round" stroke-linejoin="round"/></svg>
<svg class="s" style="left:2150px;top:676px;" width="24" height="24" viewBox="0 0 24 24"><g fill="none" stroke="rgba(204,204,220,0.6)" stroke-width="2"><ellipse cx="12" cy="5.5" rx="7" ry="3"/><path d="M5 5.5V18.5C5 20.2 8.1 21.5 12 21.5S19 20.2 19 18.5V5.5"/><path d="M5 12C5 13.7 8.1 15 12 15S19 13.7 19 12"/></g></svg>
<svg class="s" style="left:2505.2px;top:684.7px;" width="16.6" height="10.6" viewBox="0 0 16.6 10.6"><polyline points="3,3 8.30,7.60 13.60,3" fill="none" stroke="rgba(204,204,220,0.6)" stroke-width="2.4" stroke-linecap="round" stroke-linejoin="round"/></svg>
<svg class="s" style="left:2105px;top:750px;" width="70" height="40" viewBox="0 0 70 40"><g fill="#a8a9b4"><rect x="4.5" y="22" width="8" height="11" rx="2.5"/><rect x="16" y="25" width="6" height="8" rx="2.5"/><rect x="26" y="5" width="8" height="28" rx="2"/><rect x="38" y="17" width="8" height="16" rx="2.5"/><rect x="50" y="19" width="8" height="14" rx="2.5"/></g></svg>
<div class="b" style="left:2086px;top:1147.4px;width:906px;height:223.5999999999999px;background:#22252b;border-radius:16px;"></div>
<svg class="s" style="left:2080px;top:1140px;" width="920" height="240" viewBox="0 0 920 240"><defs><linearGradient id="gt" gradientUnits="userSpaceOnUse" x1="460" y1="0" x2="700" y2="0"><stop offset="0" stop-color="#b150f0" stop-opacity="0"/><stop offset="1" stop-color="#b150f0"/></linearGradient><linearGradient id="gr" gradientUnits="userSpaceOnUse" x1="0" y1="8" x2="0" y2="231"><stop offset="0" stop-color="#b150f0"/><stop offset="1" stop-color="#e55a9c"/></linearGradient><linearGradient id="gb" gradientUnits="userSpaceOnUse" x1="520" y1="0" x2="910" y2="0"><stop offset="0" stop-color="#f5852a"/><stop offset="1" stop-color="#e55a9c"/></linearGradient></defs><path d="M460 8.5H897.9A13 13 0 0 1 910.9 21.5" fill="none" stroke="url(#gt)" stroke-width="2.2"/><path d="M910.9 21.5V216.9A13 13 0 0 1 897.9 229.9" fill="none" stroke="url(#gr)" stroke-width="2.2"/><path d="M520 229.9H897.9" fill="none" stroke="url(#gb)" stroke-width="2.2"/></svg>
<svg class="s" style="left:0px;top:0px;" width="3008" height="1382" viewBox="0 0 3008 1382"><g fill="none" stroke="#ccccdc" stroke-width="2.2" stroke-linecap="round"><circle cx="2122.2" cy="1179.8" r="5"/><path d="M2127.2 1174.6V1181.5a3.2 3.2 0 0 0 6.4 0V1179.8a11.4 11.4 0 1 0-4.6 9.2"/></g></svg>
<svg class="s" style="left:2940px;top:1164px;" width="32" height="32" viewBox="0 0 32 32"><g fill="#a3a4ae"><path d="M12.76,6.01 L12.99,1.82 L19.01,1.82 L19.24,6.01 L20.02,6.30 L20.77,6.64 L23.90,3.84 L28.16,8.10 L25.36,11.23 L25.70,11.98 L25.99,12.76 L30.18,12.99 L30.18,19.01 L25.99,19.24 L25.70,20.02 L25.36,20.77 L28.16,23.90 L23.90,28.16 L20.77,25.36 L20.02,25.70 L19.24,25.99 L19.01,30.18 L12.99,30.18 L12.76,25.99 L11.98,25.70 L11.23,25.36 L8.10,28.16 L3.84,23.90 L6.64,20.77 L6.30,20.02 L6.01,19.24 L1.82,19.01 L1.82,12.99 L6.01,12.76 L6.30,11.98 L6.64,11.23 L3.84,8.10 L8.10,3.84 L11.23,6.64 L11.98,6.30Z"/></g><circle cx="16" cy="16" r="4.5" fill="#22252b"/></svg>
<div class="b" style="left:2111px;top:1240px;width:2.5px;height:33px;background:#ccccdc;"></div>
<div class="b" style="left:2104.6px;top:1311px;width:226.5999999999999px;height:42px;background:rgba(204,204,220,0.025);box-shadow:inset 0 0 0 2px rgba(204,204,220,0.07);border-radius:9px;"></div>
<svg class="s" style="left:2118px;top:1319px;" width="24" height="24" viewBox="0 0 24 24"><g fill="none" stroke="rgba(204,204,220,0.35)" stroke-width="2"><rect x="3" y="3" width="7" height="7"/><rect x="14" y="3" width="7" height="7"/><rect x="3" y="14" width="7" height="7"/><rect x="14" y="14" width="7" height="7"/></g></svg>
<svg class="s" style="left:2302px;top:1322px;" width="18" height="12" viewBox="0 0 18 12"><polyline points="3,9 9,3 15,9" fill="none" stroke="rgba(204,204,220,0.35)" stroke-width="2" stroke-linecap="round"/></svg>
<svg class="s" style="left:2812px;top:1312px;" width="36" height="36" viewBox="0 0 36 36"><circle cx="18" cy="18" r="14.5" fill="none" stroke="#5a5c63" stroke-width="3"/><path d="M18 3.5A14.5 14.5 0 0 1 32.5 18" fill="none" stroke="#a8a9b2" stroke-width="3"/></svg>
<svg class="s" style="left:2866px;top:1311px;" width="30" height="34" viewBox="0 0 30 34"><g fill="none" stroke="#ccccdc" stroke-width="2.4" stroke-linejoin="round" stroke-linecap="round"><path d="M4 3.5H17L25.5 12V30.5H4z"/><path d="M17 3.5V12H25.5"/><line x1="9" y1="17" x2="13" y2="17"/><line x1="9" y1="22" x2="21" y2="22"/><line x1="9" y1="26.5" x2="21" y2="26.5"/></g></svg>
<div class="b" style="left:2914.5px;top:1302.3px;width:51.09999999999991px;height:51.40000000000009px;background:#363940;border-radius:26px;"></div>
<div class="b" style="left:2931.4px;top:1320px;width:17.299999999999727px;height:17px;background:#aeaeb8;border-radius:3.5px;"></div>
<div class="t" style="left:112.7px;top:55.3px;font-size:30px;line-height:30px;color:#6e9fff;letter-spacing:0.36px;-webkit-text-stroke:0.85px currentColor;">Add variable</div>
<div class="t" style="left:690.0px;top:55.1px;font-size:30px;line-height:30px;color:#ccccdc;letter-spacing:0.47px;-webkit-text-stroke:0.85px currentColor;">Last 6 hours</div>
<div class="t" style="left:1163.6px;top:54.9px;font-size:30px;line-height:30px;color:#ccccdc;letter-spacing:0.24px;-webkit-text-stroke:0.85px currentColor;">Refresh</div>
<div class="t" style="left:1440.2px;top:54.9px;font-size:30px;line-height:30px;color:#ccccdc;letter-spacing:-0.19px;-webkit-text-stroke:0.85px currentColor;">Share</div>
<div class="t" style="left:1657.3px;top:54.9px;font-size:30px;line-height:30px;color:#ffffff;letter-spacing:-0.50px;-webkit-text-stroke:0.85px currentColor;">Save</div>
<div class="t" style="left:1904.8px;top:54.9px;font-size:30px;line-height:30px;color:#ccccdc;letter-spacing:0.39px;-webkit-text-stroke:0.85px currentColor;">Exit edit</div>
<div class="t" style="left:51.0px;top:136.5px;font-size:25px;line-height:25px;color:#ccccdc;letter-spacing:0.71px;-webkit-text-stroke:0.85px currentColor;">Data source</div>
<div class="t" style="left:227.0px;top:134.9px;font-size:30px;line-height:30px;color:#ccccdc;letter-spacing:0.72px;-webkit-text-stroke:0.4px currentColor;">cloudwatch</div>
<div class="t" style="left:524.4px;top:137.1px;font-size:25px;line-height:25px;color:#ccccdc;letter-spacing:0.50px;-webkit-text-stroke:0.85px currentColor;">Region</div>
<div class="t" style="left:640.5px;top:134.9px;font-size:30px;line-height:30px;color:#ccccdc;letter-spacing:0.51px;-webkit-text-stroke:0.4px currentColor;">default</div>
<div class="t" style="left:834.7px;top:137.1px;font-size:25px;line-height:25px;color:#ccccdc;letter-spacing:1.11px;-webkit-text-stroke:0.85px currentColor;">Period [sec]</div>
<div class="t" style="left:1013.2px;top:134.6px;font-size:30px;line-height:30px;color:#ccccdc;letter-spacing:1.62px;-webkit-text-stroke:0.4px currentColor;">300</div>
<div class="t" style="left:80.0px;top:228.7px;font-size:34px;line-height:34px;color:#ccccdc;letter-spacing:0.45px;-webkit-text-stroke:1.1px currentColor;">Cluster metrics</div>
<div class="t" style="left:106.0px;top:319.5px;font-size:29px;line-height:29px;color:#ccccdc;letter-spacing:0.95px;-webkit-text-stroke:0.85px currentColor;">CPU utilization per cluster [%]</div>
<div class="t" style="left:104.6px;top:928.5px;font-size:29px;line-height:29px;color:#ccccdc;letter-spacing:1.08px;-webkit-text-stroke:0.85px currentColor;">Database connections [count sum]</div>
<div class="t" style="left:1024.5px;top:927.5px;font-size:29px;line-height:29px;color:#ccccdc;letter-spacing:0.86px;-webkit-text-stroke:0.85px currentColor;">Available RAM [bytes]</div>
<div class="t" style="left:114.1px;top:391.8px;font-size:25px;line-height:25px;color:#ccccdc;-webkit-text-stroke:0.4px currentColor;">20</div>
<div class="t" style="left:114.1px;top:457.2px;font-size:25px;line-height:25px;color:#ccccdc;-webkit-text-stroke:0.4px currentColor;">15</div>
<div class="t" style="left:114.1px;top:522.6px;font-size:25px;line-height:25px;color:#ccccdc;-webkit-text-stroke:0.4px currentColor;">10</div>
<div class="t" style="left:128.0px;top:588.0px;font-size:25px;line-height:25px;color:#ccccdc;-webkit-text-stroke:0.4px currentColor;">5</div>
<div class="t" style="left:128.0px;top:653.4px;font-size:25px;line-height:25px;color:#ccccdc;-webkit-text-stroke:0.4px currentColor;">0</div>
<div class="t" style="left:119.7px;top:718.8px;font-size:25px;line-height:25px;color:#ccccdc;-webkit-text-stroke:0.4px currentColor;">-5</div>
<div class="t" style="left:105.8px;top:784.2px;font-size:25px;line-height:25px;color:#ccccdc;-webkit-text-stroke:0.4px currentColor;">-10</div>
<div class="t" style="left:166.8px;top:840.2px;font-size:25px;line-height:25px;color:#ccccdc;-webkit-text-stroke:0.4px currentColor;">11:00</div>
<div class="t" style="left:282.1px;top:840.2px;font-size:25px;line-height:25px;color:#ccccdc;-webkit-text-stroke:0.4px currentColor;">11:30</div>
<div class="t" style="left:396.4px;top:840.2px;font-size:25px;line-height:25px;color:#ccccdc;-webkit-text-stroke:0.4px currentColor;">12:00</div>
<div class="t" style="left:511.7px;top:840.2px;font-size:25px;line-height:25px;color:#ccccdc;-webkit-text-stroke:0.4px currentColor;">12:30</div>
<div class="t" style="left:627.0px;top:840.2px;font-size:25px;line-height:25px;color:#ccccdc;-webkit-text-stroke:0.4px currentColor;">13:00</div>
<div class="t" style="left:742.2px;top:840.2px;font-size:25px;line-height:25px;color:#ccccdc;-webkit-text-stroke:0.4px currentColor;">13:30</div>
<div class="t" style="left:857.5px;top:840.2px;font-size:25px;line-height:25px;color:#ccccdc;-webkit-text-stroke:0.4px currentColor;">14:00</div>
<div class="t" style="left:972.8px;top:840.2px;font-size:25px;line-height:25px;color:#ccccdc;-webkit-text-stroke:0.4px currentColor;">14:30</div>
<div class="t" style="left:1088.0px;top:840.2px;font-size:25px;line-height:25px;color:#ccccdc;-webkit-text-stroke:0.4px currentColor;">15:00</div>
<div class="t" style="left:1203.3px;top:840.2px;font-size:25px;line-height:25px;color:#ccccdc;-webkit-text-stroke:0.4px currentColor;">15:30</div>
<div class="t" style="left:1318.6px;top:840.2px;font-size:25px;line-height:25px;color:#ccccdc;-webkit-text-stroke:0.4px currentColor;">16:00</div>
<div class="t" style="left:1433.8px;top:840.2px;font-size:25px;line-height:25px;color:#ccccdc;-webkit-text-stroke:0.4px currentColor;">16:30</div>
<div class="t" style="left:1610.5px;top:399.8px;font-size:25px;line-height:25px;color:#6e9fff;letter-spacing:1.07px;-webkit-text-stroke:0.85px currentColor;">Name</div>
<div class="t" style="left:1802.1px;top:399.8px;font-size:25px;line-height:25px;color:#6e9fff;letter-spacing:0.30px;-webkit-text-stroke:0.85px currentColor;">Mean</div>
<div class="t" style="left:1612.5px;top:447.8px;font-size:25px;line-height:25px;color:#ccccdc;letter-spacing:0.40px;-webkit-text-stroke:0.4px currentColor;">A-series</div>
<div class="t" style="left:1801.3px;top:447.8px;font-size:25px;line-height:25px;color:#ccccdc;letter-spacing:0.40px;-webkit-text-stroke:0.4px currentColor;">0.528</div>
<div class="t" style="left:1612.5px;top:495.6px;font-size:25px;line-height:25px;color:#ccccdc;letter-spacing:0.40px;-webkit-text-stroke:0.4px currentColor;">A-series1</div>
<div class="t" style="left:1816.5px;top:495.6px;font-size:25px;line-height:25px;color:#ccccdc;letter-spacing:0.40px;-webkit-text-stroke:0.4px currentColor;">11.4</div>
<div class="t" style="left:1612.5px;top:543.4px;font-size:25px;line-height:25px;color:#ccccdc;letter-spacing:0.40px;-webkit-text-stroke:0.4px currentColor;">A-series2</div>
<div class="t" style="left:1801.3px;top:543.4px;font-size:25px;line-height:25px;color:#ccccdc;letter-spacing:0.40px;-webkit-text-stroke:0.4px currentColor;">0.552</div>
<div class="t" style="left:1612.5px;top:591.2px;font-size:25px;line-height:25px;color:#ccccdc;letter-spacing:0.40px;-webkit-text-stroke:0.4px currentColor;">A-series3</div>
<div class="t" style="left:1801.3px;top:591.2px;font-size:25px;line-height:25px;color:#ccccdc;letter-spacing:0.40px;-webkit-text-stroke:0.4px currentColor;">0.702</div>
<div class="t" style="left:98.5px;top:1031.4px;font-size:25px;line-height:25px;color:#ccccdc;-webkit-text-stroke:0.4px currentColor;">100</div>
<div class="t" style="left:112.4px;top:1095.7px;font-size:25px;line-height:25px;color:#ccccdc;-webkit-text-stroke:0.4px currentColor;">80</div>
<div class="t" style="left:112.4px;top:1160.0px;font-size:25px;line-height:25px;color:#ccccdc;-webkit-text-stroke:0.4px currentColor;">60</div>
<div class="t" style="left:112.4px;top:1224.3px;font-size:25px;line-height:25px;color:#ccccdc;-webkit-text-stroke:0.4px currentColor;">40</div>
<div class="t" style="left:112.4px;top:1288.6px;font-size:25px;line-height:25px;color:#ccccdc;-webkit-text-stroke:0.4px currentColor;">20</div>
<div class="t" style="left:126.3px;top:1352.9px;font-size:25px;line-height:25px;color:#ccccdc;-webkit-text-stroke:0.4px currentColor;">0</div>
<div class="t" style="left:2156.5px;top:34.0px;font-size:30px;line-height:30px;color:#ccccdc;letter-spacing:0.39px;-webkit-text-stroke:0.85px currentColor;">Adapt dashboard to environment</div>
<div class="t" style="left:2249.4px;top:156.9px;font-size:22px;line-height:22px;color:#ccccdc;letter-spacing:-0.32px;-webkit-text-stroke:0.7px currentColor;">Dashboard: Amazon RDS</div>
<div class="t" style="left:2208.4px;top:213.2px;font-size:30px;line-height:30px;color:#ccccdc;letter-spacing:0.22px;-webkit-text-stroke:0.4px currentColor;">Adapt this dashboard to my environment by</div>
<div class="t" style="left:2207.4px;top:257.2px;font-size:30px;line-height:30px;color:#ccccdc;letter-spacing:0.28px;-webkit-text-stroke:0.4px currentColor;">connecting it to my available data sources and</div>
<div class="t" style="left:2207.4px;top:300.8px;font-size:30px;line-height:30px;color:#ccccdc;letter-spacing:0.28px;-webkit-text-stroke:0.4px currentColor;">adjusting queries as needed.</div>
<div class="t" style="left:2208.4px;top:344.4px;font-size:26px;line-height:26px;color:rgba(204,204,220,0.55);letter-spacing:0.19px;-webkit-text-stroke:0.4px currentColor;">Today at 4:46 PM</div>
<div class="t" style="left:2146.0px;top:426.0px;font-size:26px;line-height:26px;color:rgba(204,204,220,0.6);letter-spacing:0.20px;-webkit-text-stroke:0.85px currentColor;">thought</div>
<div class="t" style="left:2100.0px;top:465.6px;font-size:30px;line-height:30px;color:#ccccdc;letter-spacing:0.27px;-webkit-text-stroke:0.4px currentColor;">Let me start by reading the dashboard structure and available</div>
<div class="t" style="left:2101.0px;top:508.0px;font-size:30px;line-height:30px;color:#ccccdc;letter-spacing:0.40px;-webkit-text-stroke:0.4px currentColor;">datasources simultaneously.</div>
<div class="t" style="left:2137.5px;top:575.3px;font-size:26px;line-height:26px;color:rgba(204,204,220,0.6);letter-spacing:0.07px;-webkit-text-stroke:0.85px currentColor;">Searched</div>
<div class="t" style="left:2181.0px;top:628.0px;font-size:26px;line-height:26px;color:rgba(204,204,220,0.6);letter-spacing:0.04px;-webkit-text-stroke:0.4px currentColor;">read dashboard panels</div>
<div class="t" style="left:2181.0px;top:674.9px;font-size:26px;line-height:26px;color:rgba(204,204,220,0.6);letter-spacing:0.10px;-webkit-text-stroke:0.4px currentColor;">list available datasources</div>
<div class="t" style="left:2112.0px;top:1241.9px;font-size:30px;line-height:30px;color:rgba(204,204,220,0.6);letter-spacing:0.31px;-webkit-text-stroke:0.4px currentColor;">Spark a conversation, @ to fuel it with context, / for commands</div>
<div class="t" style="left:2149.0px;top:1321.9px;font-size:22px;line-height:22px;color:rgba(204,204,220,0.4);letter-spacing:-0.04px;-webkit-text-stroke:0.4px currentColor;">Dashboarding</div>
</body></html>
